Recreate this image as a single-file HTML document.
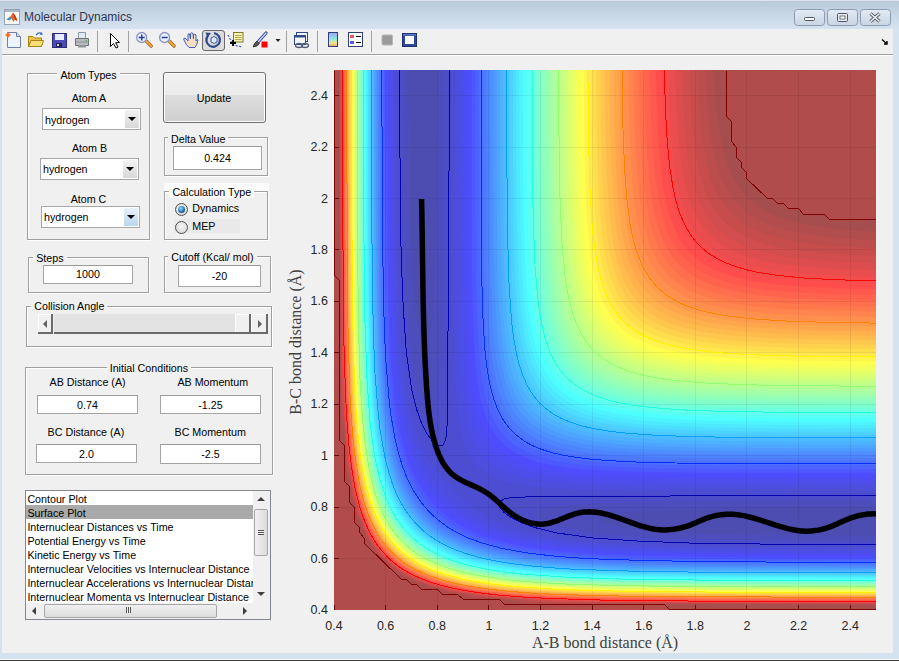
<!DOCTYPE html><html><head><meta charset="utf-8"><style>
*{margin:0;padding:0;box-sizing:border-box}
html,body{width:899px;height:661px;overflow:hidden;background:#f0f0f0;font-family:"Liberation Sans", sans-serif}
.t{position:absolute;white-space:nowrap;font-family:"Liberation Sans", sans-serif}
.tb{background:#f0f0f0;padding:0 3px}
.pnl{position:absolute;border:1px solid #a0a0a0;box-shadow:inset 1px 1px 0 #fff, 1px 1px 0 #fff}
.edit{position:absolute;background:#fff;border:1px solid #a5a5a5;border-top-color:#9a9a9a}
.pop{position:absolute;background:#fff;border:1px solid #a8a8a8}
.popbtn{position:absolute;background:linear-gradient(#f2f2f2,#d8d8d8);}
.popbtn.hov{background:linear-gradient(#e8f2fa,#b8d6ee)}
.arr{position:absolute;width:0;height:0;border-left:4px solid transparent;border-right:4px solid transparent;border-top:4px solid #000}
.btn{position:absolute;border:1px solid #707070;border-radius:3px;background:linear-gradient(#f2f2f2 0,#ebebeb 45%,#dddddd 46%,#cfcfcf 100%);box-shadow:inset 0 0 0 1px #fcfcfc}
.radio{position:absolute;width:13px;height:13px;border-radius:50%;border:1px solid #4f4f4f;background:radial-gradient(circle at 50% 40%,#f8f8f8,#cfcfcf)}
.radio.on::after{content:"";position:absolute;left:2px;top:2px;width:7px;height:7px;border-radius:50%;background:radial-gradient(circle at 40% 35%,#9be0ff,#1a6aa8 60%,#0d3d6b)}
.slider{position:absolute}
.slider div{position:absolute}
.sbtn{background:#f0f0f0;border-right:2px solid #6a6a6a;border-bottom:2px solid #6a6a6a;box-shadow:inset 1px 1px 0 #fff}
.strough{background:#e3e3e3;border-bottom:2px solid #6a6a6a}
.sarrL{width:0;height:0;border-top:4px solid transparent;border-bottom:4px solid transparent;border-right:4px solid #606060}
.sarrR{width:0;height:0;border-top:4px solid transparent;border-bottom:4px solid transparent;border-left:4px solid #606060}
.lb{position:absolute;background:#fff;border:1px solid #828790}
.vsb,.hsb{position:absolute;background:#f0f0f0}
.vsb div,.hsb div{position:absolute}
.vthumb{background:linear-gradient(90deg,#f0f0f0,#dcdcdc);border:1px solid #a7a7a7;border-radius:2px}
.hthumb{background:linear-gradient(#f0f0f0,#dcdcdc);border:1px solid #a7a7a7;border-radius:2px}
.grip{width:6px;height:5px;border-top:1px solid #555;border-bottom:1px solid #555;background:linear-gradient(#f0f0f0 40%,#555 40%,#555 60%,#f0f0f0 60%)}
.hgrip{width:5px;height:6px;border-left:1px solid #555;border-right:1px solid #555;background:linear-gradient(90deg,#f0f0f0 40%,#555 40%,#555 60%,#f0f0f0 60%)}
.up{width:0;height:0;border-left:4px solid transparent;border-right:4px solid transparent;border-bottom:4px solid #404040}
.dn{width:0;height:0;border-left:4px solid transparent;border-right:4px solid transparent;border-top:4px solid #404040}
.lt{width:0;height:0;border-top:4px solid transparent;border-bottom:4px solid transparent;border-right:4px solid #404040}
.rt{width:0;height:0;border-top:4px solid transparent;border-bottom:4px solid transparent;border-left:4px solid #404040}
.plot{position:absolute;left:0;top:0}
#title{position:absolute;left:0;top:0;width:899px;height:29px;background:linear-gradient(#b9cad9,#d5e3f1);border-top:1px solid #dfe5ee}
#tool{position:absolute;left:2px;top:29px;width:891px;height:26px;background:#f0f0f0;border-bottom:1px solid #a0a0a0;box-shadow:0 1px 0 #fff}
.frameL{position:absolute;left:0;top:29px;width:2px;height:630px;background:#d5e2f0}
.frameR{position:absolute;left:893px;top:29px;width:6px;height:630px;background:#d5e2f0}
.frameB{position:absolute;left:0;top:653px;width:899px;height:6px;background:#d5e2f0}
.frameD{position:absolute;left:0;top:659px;width:899px;height:2px;background:#3a3a3a;border-top:1px solid #f8f8f8}
.wb{position:absolute;top:9px;width:31px;height:17px;border:1px solid #8d9db3;border-radius:3px;background:linear-gradient(#dfe8f2,#c9d6e5)}
</style></head><body>
<div id="title"></div>
<div class="frameL"></div><div class="frameR"></div><div class="frameB"></div><div class="frameD"></div>
<div id="tool"></div>
<div class="pnl" style="left:27px;top:73px;width:123px;height:167px;"></div><div class="pnl" style="left:164px;top:137px;width:104px;height:39px;"></div><div class="pnl" style="left:164px;top:191px;width:104px;height:49px;"></div><div class="pnl" style="left:28px;top:257px;width:121px;height:36px;"></div><div class="pnl" style="left:164px;top:256px;width:107px;height:37px;"></div><div class="pnl" style="left:26px;top:306px;width:246px;height:41px;"></div><div class="pnl" style="left:25px;top:367px;width:248px;height:108px;"></div><div class="t" style="left:-11.5px;top:68.8px;width:200px;text-align:center;font-size:10.7px;line-height:13px;color:#000;"><span class="tb">Atom Types</span></div><div class="t" style="left:-11.1px;top:91.8px;width:200px;text-align:center;font-size:10.7px;line-height:13px;color:#000;">Atom A</div><div class="pop" style="left:42px;top:108px;width:99px;height:22px;"></div><div class="popbtn" style="left:125px;top:110px;width:14px;height:18px;"></div><div class="arr" style="left:128px;top:117px"></div><div class="t" style="left:45.0px;top:113.7px;font-size:10.7px;line-height:13px;color:#000;">hydrogen</div><div class="t" style="left:-10.5px;top:141.8px;width:200px;text-align:center;font-size:10.7px;line-height:13px;color:#000;">Atom B</div><div class="pop" style="left:40px;top:158px;width:99px;height:22px;"></div><div class="popbtn" style="left:123px;top:160px;width:14px;height:18px;"></div><div class="arr" style="left:126px;top:167px"></div><div class="t" style="left:43.0px;top:163.2px;font-size:10.7px;line-height:13px;color:#000;">hydrogen</div><div class="t" style="left:-11.5px;top:193.1px;width:200px;text-align:center;font-size:10.7px;line-height:13px;color:#000;">Atom C</div><div class="pop" style="left:41px;top:206px;width:99px;height:22px;"></div><div class="popbtn hov" style="left:124px;top:208px;width:14px;height:18px;"></div><div class="arr" style="left:127px;top:215px"></div><div class="t" style="left:44.0px;top:211.4px;font-size:10.7px;line-height:13px;color:#000;">hydrogen</div><div class="btn" style="left:163px;top:72px;width:103px;height:51px;"></div><div class="t" style="left:114.0px;top:91.8px;width:200px;text-align:center;font-size:10.7px;line-height:13px;color:#000;">Update</div><div class="t" style="left:168.0px;top:133.0px;font-size:10.7px;line-height:13px;color:#000;"><span class="tb">Delta Value</span></div><div class="edit" style="left:173px;top:146px;width:89px;height:24px;"></div><div class="t" style="left:173.0px;top:151.7px;width:89px;text-align:center;font-size:10.7px;line-height:13px;color:#000;">0.424</div><div class="" style="left:164px;top:183px;width:105px;height:8px;position:absolute;background:#fbfbfb"></div><div class="t" style="left:169.4px;top:185.7px;font-size:10.7px;line-height:13px;color:#000;"><span class="tb" style="background:#fbfbfb">Calculation Type</span></div><div class="" style="left:174px;top:219px;width:66px;height:14px;position:absolute;background:#e9e9e9"></div><div class="radio on" style="left:175px;top:203px"></div><div class="radio" style="left:175px;top:221px"></div><div class="t" style="left:192.3px;top:202.4px;font-size:10.7px;line-height:13px;color:#000;">Dynamics</div><div class="t" style="left:192.3px;top:220.2px;font-size:10.7px;line-height:13px;color:#000;">MEP</div><div class="t" style="left:33.2px;top:251.8px;font-size:10.7px;line-height:13px;color:#000;"><span class="tb">Steps</span></div><div class="edit" style="left:43px;top:265px;width:90px;height:19px;"></div><div class="t" style="left:43.0px;top:268.3px;width:90px;text-align:center;font-size:10.7px;line-height:13px;color:#000;">1000</div><div class="t" style="left:168.2px;top:250.7px;font-size:10.7px;line-height:13px;color:#000;"><span class="tb">Cutoff (Kcal/ mol)</span></div><div class="edit" style="left:178px;top:265px;width:83px;height:22px;"></div><div class="t" style="left:178.0px;top:269.5px;width:83px;text-align:center;font-size:10.7px;line-height:13px;color:#000;">-20</div><div class="t" style="left:31.3px;top:300.4px;font-size:10.7px;line-height:13px;color:#000;"><span class="tb">Collision Angle</span></div><div class="slider" style="left:38px;top:314px;width:230px;height:20px">
<div class="sbtn" style="left:0;top:0;width:15px;height:20px"></div>
<div class="sarrL" style="left:5px;top:6px"></div>
<div class="strough" style="left:16px;top:0;width:181px;height:20px"></div>
<div class="sbtn" style="left:197px;top:0;width:16px;height:20px"></div>
<div class="sbtn" style="left:213px;top:0;width:17px;height:20px"></div>
<div class="sarrR" style="left:220px;top:6px"></div>
</div><div class="t" style="left:48.9px;top:361.8px;width:200px;text-align:center;font-size:10.7px;line-height:13px;color:#000;"><span class="tb">Initial Conditions</span></div><div class="t" style="left:-12.4px;top:376.0px;width:200px;text-align:center;font-size:10.7px;line-height:13px;color:#000;">AB Distance (A)</div><div class="edit" style="left:37px;top:395px;width:101px;height:19px;"></div><div class="t" style="left:37.0px;top:399.1px;width:101px;text-align:center;font-size:10.7px;line-height:13px;color:#000;">0.74</div><div class="t" style="left:-14.1px;top:426.2px;width:200px;text-align:center;font-size:10.7px;line-height:13px;color:#000;">BC Distance (A)</div><div class="edit" style="left:36px;top:444px;width:101px;height:19px;"></div><div class="t" style="left:36.0px;top:447.9px;width:101px;text-align:center;font-size:10.7px;line-height:13px;color:#000;">2.0</div><div class="t" style="left:112.8px;top:376.0px;width:200px;text-align:center;font-size:10.7px;line-height:13px;color:#000;">AB Momentum</div><div class="edit" style="left:160px;top:395px;width:101px;height:19px;"></div><div class="t" style="left:160.0px;top:399.1px;width:101px;text-align:center;font-size:10.7px;line-height:13px;color:#000;">-1.25</div><div class="t" style="left:110.2px;top:426.2px;width:200px;text-align:center;font-size:10.7px;line-height:13px;color:#000;">BC Momentum</div><div class="edit" style="left:160px;top:444px;width:101px;height:20px;"></div><div class="t" style="left:160.0px;top:447.9px;width:101px;text-align:center;font-size:10.7px;line-height:13px;color:#000;">-2.5</div><div class="lb" style="left:25px;top:490px;width:246px;height:130px"></div><div class="" style="left:26px;top:505px;width:227px;height:14px;position:absolute;background:#aaaaaa"></div><div style="position:absolute;left:26px;top:491px;width:227px;height:112px;overflow:hidden"><div class="t" style="left:1.4px;top:1.8px;font-size:10.7px;line-height:13px;color:#000;">Contour Plot</div><div class="t" style="left:1.4px;top:15.6px;font-size:10.7px;line-height:13px;color:#000;">Surface Plot</div><div class="t" style="left:1.4px;top:29.8px;font-size:10.7px;line-height:13px;color:#000;">Internuclear Distances vs Time</div><div class="t" style="left:1.4px;top:43.8px;font-size:10.7px;line-height:13px;color:#000;">Potential Energy vs Time</div><div class="t" style="left:1.4px;top:57.5px;font-size:10.7px;line-height:13px;color:#000;">Kinetic Energy vs Time</div><div class="t" style="left:1.4px;top:71.7px;font-size:10.7px;line-height:13px;color:#000;">Internuclear Velocities vs Internuclear Distance</div><div class="t" style="left:1.4px;top:85.5px;font-size:10.7px;line-height:13px;color:#000;">Internuclear Accelerations vs Internuclear Distance</div><div class="t" style="left:1.4px;top:99.7px;font-size:10.7px;line-height:13px;color:#000;">Internuclear Momenta vs Internuclear Distance</div></div><div class="vsb" style="left:253px;top:491px;width:17px;height:112px">
<div class="up" style="left:4px;top:6px"></div>
<div class="vthumb" style="left:1px;top:18px;width:14px;height:47px"></div>
<div class="grip" style="left:5px;top:39px"></div>
<div class="dn" style="left:4px;top:101px"></div></div>
<div class="hsb" style="left:26px;top:603px;width:227px;height:16px">
<div class="lt" style="left:6px;top:4px"></div>
<div class="hthumb" style="left:18px;top:1px;width:173px;height:14px"></div>
<div class="hgrip" style="left:100px;top:4px"></div>
<div class="rt" style="left:217px;top:4px"></div></div>
<div style="position:absolute;left:253px;top:603px;width:17px;height:16px;background:#f0f0f0"></div><div class="t" style="left:314.0px;top:617.7px;width:40px;text-align:center;font-size:12.5px;line-height:16px;color:#262626;">0.4</div><div class="t" style="left:365.6px;top:617.7px;width:40px;text-align:center;font-size:12.5px;line-height:16px;color:#262626;">0.6</div><div class="t" style="left:417.2px;top:617.7px;width:40px;text-align:center;font-size:12.5px;line-height:16px;color:#262626;">0.8</div><div class="t" style="left:468.9px;top:617.7px;width:40px;text-align:center;font-size:12.5px;line-height:16px;color:#262626;">1</div><div class="t" style="left:520.5px;top:617.7px;width:40px;text-align:center;font-size:12.5px;line-height:16px;color:#262626;">1.2</div><div class="t" style="left:572.1px;top:617.7px;width:40px;text-align:center;font-size:12.5px;line-height:16px;color:#262626;">1.4</div><div class="t" style="left:623.7px;top:617.7px;width:40px;text-align:center;font-size:12.5px;line-height:16px;color:#262626;">1.6</div><div class="t" style="left:675.3px;top:617.7px;width:40px;text-align:center;font-size:12.5px;line-height:16px;color:#262626;">1.8</div><div class="t" style="left:727.0px;top:617.7px;width:40px;text-align:center;font-size:12.5px;line-height:16px;color:#262626;">2</div><div class="t" style="left:778.6px;top:617.7px;width:40px;text-align:center;font-size:12.5px;line-height:16px;color:#262626;">2.2</div><div class="t" style="left:830.2px;top:617.7px;width:40px;text-align:center;font-size:12.5px;line-height:16px;color:#262626;">2.4</div><div class="t" style="left:260px;top:602.0px;width:68px;text-align:right;font-size:12.5px;line-height:16px;color:#262626">0.4</div><div class="t" style="left:260px;top:550.6px;width:68px;text-align:right;font-size:12.5px;line-height:16px;color:#262626">0.6</div><div class="t" style="left:260px;top:499.1px;width:68px;text-align:right;font-size:12.5px;line-height:16px;color:#262626">0.8</div><div class="t" style="left:260px;top:447.7px;width:68px;text-align:right;font-size:12.5px;line-height:16px;color:#262626">1</div><div class="t" style="left:260px;top:396.3px;width:68px;text-align:right;font-size:12.5px;line-height:16px;color:#262626">1.2</div><div class="t" style="left:260px;top:344.9px;width:68px;text-align:right;font-size:12.5px;line-height:16px;color:#262626">1.4</div><div class="t" style="left:260px;top:293.4px;width:68px;text-align:right;font-size:12.5px;line-height:16px;color:#262626">1.6</div><div class="t" style="left:260px;top:242.0px;width:68px;text-align:right;font-size:12.5px;line-height:16px;color:#262626">1.8</div><div class="t" style="left:260px;top:190.6px;width:68px;text-align:right;font-size:12.5px;line-height:16px;color:#262626">2</div><div class="t" style="left:260px;top:139.1px;width:68px;text-align:right;font-size:12.5px;line-height:16px;color:#262626">2.2</div><div class="t" style="left:260px;top:87.7px;width:68px;text-align:right;font-size:12.5px;line-height:16px;color:#262626">2.4</div><div class="t" style="left:455.0px;top:632.5px;width:300px;text-align:center;font-size:16px;line-height:20px;color:#404040;font-family:'Liberation Serif',serif;">A-B bond distance (&Aring;)</div><div class="t" style="left:146px;top:332px;width:300px;text-align:center;font-size:16px;line-height:20px;color:#404040;font-family:'Liberation Serif',serif;transform:rotate(-90deg);transform-origin:150px 10px">B-C bond distance (&Aring;)</div>
<svg class="plot" width="899" height="661" viewBox="0 0 899 661">
<defs><clipPath id="ax"><rect x="334" y="70" width="542" height="540"/></clipPath></defs>
<g clip-path="url(#ax)">
<rect x="334" y="70" width="542" height="540" fill="#a64d4d"/>
<path d="M713.8 70.0 715.3 95.7 717.3 116.3 720.4 136.9 723.8 152.3 728.7 167.7 733.3 178.0 739.6 188.3 743.5 193.4 748.4 198.6 757.3 205.9 767.6 212.1 777.9 216.7 793.4 221.6 808.9 225.0 829.5 228.1 850.2 230.1 876.0 231.6 876.0 605.1 576.6 604.2 545.6 603.9 525.0 603.2 514.7 602.0 509.0 599.7 473.4 598.2 468.2 597.2 464.6 594.6 447.6 593.3 442.4 592.0 439.8 589.4 437.2 588.8 432.1 588.5 426.9 587.7 423.2 584.3 421.8 583.7 416.6 583.1 411.4 580.5 410.1 579.1 406.3 578.0 401.1 573.9 395.9 572.2 385.6 562.6 371.9 548.3 370.3 543.1 366.1 538.0 365.0 534.2 363.6 532.9 361.0 527.7 360.4 522.6 359.8 521.1 356.4 517.4 355.6 512.3 355.3 507.1 354.6 504.6 352.0 502.0 350.8 496.9 349.5 479.9 346.9 476.3 345.9 471.1 345.2 460.9 344.7 440.3 344.3 435.7 342.0 430.0 341.2 424.9 340.2 399.1 338.9 70.0 713.8 70.0Z" fill="#b14d4d"/>
<path d="M705.1 70.0 706.9 100.9 709.3 126.6 712.5 147.1 716.0 162.3 721.1 177.7 726.3 188.6 732.8 198.6 737.1 203.7 741.8 208.4 747.0 212.7 752.1 216.3 762.4 221.9 772.8 226.1 788.2 230.7 803.7 233.8 824.4 236.6 850.2 238.9 876.0 240.3 876.0 604.4 597.3 603.6 556.0 603.1 535.3 602.4 525.0 601.6 516.1 599.7 504.3 598.8 478.5 597.5 473.4 596.7 468.1 594.6 447.6 592.0 442.3 589.4 437.2 588.1 432.1 587.5 426.9 585.9 425.1 584.3 421.8 583.0 416.6 582.0 412.5 579.1 406.3 576.9 402.7 574.0 395.9 570.5 394.3 568.9 390.8 566.4 385.6 561.5 377.8 553.4 375.3 549.9 373.7 548.3 370.1 541.5 367.2 538.0 365.0 531.8 362.1 527.7 361.1 522.6 359.8 519.2 358.2 517.4 356.6 512.3 356.0 507.1 354.6 502.1 352.1 496.9 349.5 476.3 347.4 471.1 346.6 466.0 345.3 440.3 344.3 428.6 343.3 424.9 342.0 414.6 340.8 383.7 339.9 224.3 339.7 70.0 705.1 70.0Z" fill="#bc4d4d"/>
<path d="M697.0 70.0 698.5 100.9 700.5 125.6 703.3 147.1 706.3 162.6 710.5 178.0 716.0 191.6 719.7 198.6 723.0 203.7 726.9 208.9 731.5 213.9 736.6 218.6 741.8 222.4 752.1 228.5 766.8 234.6 783.1 239.1 798.6 242.0 820.2 244.9 845.0 246.8 876.0 248.3 876.0 603.8 607.6 603.1 566.3 602.6 540.5 601.6 530.2 600.7 524.0 599.7 483.7 597.0 478.5 596.4 472.0 594.6 463.0 593.1 452.7 591.9 447.6 590.7 444.9 589.4 437.2 587.4 432.1 586.6 421.8 582.3 416.6 580.9 414.1 579.1 406.3 575.8 390.8 565.1 385.6 560.3 379.0 553.4 368.4 538.0 365.0 530.2 363.2 527.7 361.8 522.6 357.5 512.3 356.7 507.1 354.6 499.5 353.3 496.9 352.1 491.7 351.0 481.4 349.5 472.5 347.7 466.0 346.6 455.7 344.3 420.7 343.3 414.6 342.4 404.3 341.4 373.4 340.4 229.4 340.2 70.0 697.0 70.0Z" fill="#c74d4d"/>
<path d="M689.3 70.0 690.9 106.0 692.9 131.7 695.5 152.3 699.5 172.9 704.1 188.3 706.0 193.4 710.8 203.5 717.6 214.0 721.9 219.1 726.3 223.5 731.5 227.8 736.6 231.4 747.0 237.0 753.1 239.7 762.4 243.0 777.9 247.0 794.5 250.0 819.2 252.9 845.0 254.7 876.0 256.0 876.0 603.3 617.9 602.6 571.4 601.9 545.6 600.9 488.9 596.7 452.7 591.0 432.1 585.6 416.6 579.7 406.3 574.6 395.9 567.8 390.8 563.9 385.6 559.2 380.3 553.4 376.3 548.3 369.5 538.0 364.4 527.7 358.5 512.3 353.0 491.7 349.5 468.5 347.9 460.9 343.1 399.1 341.9 363.1 341.0 234.6 340.7 70.0 689.3 70.0Z" fill="#d24d4d"/>
<path d="M682.0 70.0 683.4 106.0 685.2 131.7 687.4 152.3 690.8 172.9 695.3 190.5 700.5 204.1 705.7 214.0 710.8 221.5 716.0 227.4 721.1 232.3 726.3 236.3 736.6 242.5 741.8 245.0 752.1 249.0 767.6 253.4 788.2 257.2 814.1 260.1 839.9 261.9 876.0 263.3 876.0 602.8 628.2 602.1 581.8 601.5 550.8 600.3 488.9 595.9 457.9 591.1 452.7 590.2 432.1 584.7 417.4 579.1 406.9 574.0 395.9 566.9 390.8 562.8 385.6 558.1 380.5 552.4 375.3 545.6 370.5 538.0 367.8 532.9 365.0 526.9 359.4 512.3 353.9 491.7 348.1 455.7 343.5 388.9 342.4 352.9 341.5 234.6 341.2 70.0 682.0 70.0Z" fill="#de4d4d"/>
<path d="M675.1 70.0 676.3 106.0 678.3 136.9 681.1 162.6 684.8 183.1 689.0 198.6 690.7 203.7 695.2 214.0 701.1 224.3 704.9 229.4 709.5 234.6 715.1 239.7 721.1 244.2 731.5 250.2 741.8 254.6 747.0 256.3 762.4 260.5 783.1 264.2 808.9 267.0 839.9 269.0 876.0 270.2 876.0 602.3 726.3 602.1 617.9 601.4 571.4 600.5 530.2 598.4 488.9 595.2 457.9 590.4 442.4 586.8 432.1 583.9 419.2 579.1 408.5 574.0 401.1 569.6 395.9 566.0 390.8 561.8 385.6 557.0 380.5 551.2 375.3 544.3 368.6 532.9 365.0 525.1 362.0 517.4 357.3 502.0 353.6 486.6 348.9 455.7 345.3 409.4 343.6 373.4 342.9 347.7 342.0 234.6 341.7 70.0 675.1 70.0Z" fill="#e94d4d"/>
<path d="M668.4 70.0 669.5 106.0 671.2 136.9 673.7 162.6 676.9 183.1 680.5 198.6 685.7 214.0 690.2 223.5 693.7 229.4 697.4 234.6 701.7 239.7 707.0 244.9 713.6 250.0 721.1 254.7 726.3 257.3 733.2 260.3 741.8 263.3 757.3 267.3 777.9 270.9 803.7 273.6 834.7 275.5 876.0 276.8 876.0 601.8 695.3 601.4 592.1 600.4 550.8 598.9 519.8 597.2 494.0 595.1 473.4 592.3 452.7 588.6 432.1 583.1 421.8 579.4 416.6 577.2 410.0 574.0 401.2 568.9 390.8 560.8 385.6 555.9 380.5 550.0 375.4 543.1 372.2 538.0 369.4 532.9 364.7 522.6 359.8 508.7 356.7 496.9 354.3 486.6 351.7 471.1 348.5 445.4 345.4 399.1 343.8 358.0 343.0 311.7 342.5 214.0 342.2 70.0 668.4 70.0Z" fill="#f44d4d"/>
<path d="M662.0 70.0 663.2 111.1 664.9 142.0 668.0 172.9 671.5 193.4 675.4 208.9 679.0 219.1 681.2 224.3 685.0 231.7 690.2 239.6 694.4 244.9 699.5 250.0 705.7 255.1 710.8 258.5 716.0 261.5 724.3 265.4 739.1 270.6 757.3 274.8 777.9 277.9 803.7 280.3 834.7 282.0 876.0 283.2 876.0 601.3 695.3 600.9 597.3 599.9 556.0 598.6 519.8 596.6 494.0 594.4 468.2 590.9 447.6 586.7 432.1 582.4 422.9 579.1 416.6 576.4 411.4 573.9 401.1 567.8 395.4 563.7 389.4 558.6 384.4 553.4 380.0 548.3 375.3 541.6 370.2 532.9 365.0 521.4 360.0 507.1 357.3 496.9 354.6 484.8 352.4 471.1 349.1 445.4 345.9 399.1 344.3 352.9 343.5 306.6 343.0 214.0 342.8 70.0 662.0 70.0Z" fill="#ff4d4d"/>
<path d="M655.9 70.0 657.0 111.1 658.8 147.1 661.2 172.9 664.2 193.4 666.4 203.7 669.1 214.0 674.7 229.2 680.2 239.7 685.0 246.8 690.2 252.8 695.3 257.6 700.5 261.7 706.2 265.4 716.0 270.5 731.5 276.1 751.5 280.9 772.8 284.0 798.6 286.4 834.7 288.2 876.0 289.3 876.0 600.8 690.2 600.4 592.1 599.2 550.8 597.8 519.8 596.0 499.2 594.3 473.4 591.1 452.7 587.3 440.5 584.3 432.1 581.7 424.9 579.1 416.6 575.6 404.1 568.9 396.7 563.7 390.8 558.8 385.6 553.7 381.0 548.3 374.0 538.0 370.1 531.1 366.3 522.6 359.8 503.9 356.8 491.7 353.8 476.3 349.5 443.2 346.8 404.3 345.0 358.0 344.0 301.4 343.3 70.0 655.9 70.0Z" fill="#ff584d"/>
<path d="M650.0 70.0 651.1 116.3 653.0 152.3 655.3 178.0 659.2 203.2 661.7 214.0 664.4 223.2 669.5 236.4 674.0 244.9 677.3 250.0 681.3 255.1 686.0 260.3 691.9 265.4 699.3 270.6 710.8 276.6 726.3 282.1 736.6 284.8 747.0 286.9 772.8 290.4 798.6 292.6 834.7 294.2 876.0 295.1 876.0 600.2 685.0 599.8 592.1 598.6 550.8 597.2 519.8 595.5 499.2 593.7 473.4 590.5 452.7 586.6 437.2 582.6 426.9 579.2 421.8 577.1 414.9 574.0 405.5 568.9 398.0 563.7 391.7 558.6 386.5 553.4 382.1 548.3 374.8 538.0 370.1 529.4 367.1 522.6 363.2 512.3 359.8 501.4 354.4 476.3 352.2 460.9 349.8 440.3 347.3 404.3 345.5 352.9 344.4 291.1 343.8 70.0 650.0 70.0Z" fill="#ff634d"/>
<path d="M644.3 70.0 645.4 116.3 647.0 152.3 649.1 178.0 652.6 203.7 654.7 214.0 657.4 224.3 659.2 230.2 662.9 239.7 665.3 244.9 669.5 252.4 674.7 259.6 679.8 265.4 685.7 270.6 692.9 275.7 700.5 280.0 705.7 282.4 715.2 286.0 721.1 287.8 731.5 290.5 741.8 292.5 767.6 296.1 793.4 298.2 829.5 299.8 876.0 300.8 876.0 599.7 690.2 599.3 592.1 598.0 550.8 596.6 519.8 594.9 494.0 592.5 473.4 589.9 447.6 584.7 432.1 580.2 416.6 574.0 406.3 568.4 399.3 563.7 393.0 558.6 387.6 553.4 383.1 548.3 375.3 537.2 370.1 527.7 367.9 522.6 363.9 512.3 359.8 498.7 354.6 473.9 350.5 440.3 347.9 404.3 346.2 358.0 345.1 296.3 344.5 208.9 344.3 70.0 644.3 70.0Z" fill="#ff6e4d"/>
<path d="M638.8 70.0 639.9 121.4 641.5 157.4 643.7 184.1 647.2 208.9 649.2 219.1 651.8 229.4 654.0 236.4 657.3 244.9 659.7 250.0 664.4 258.3 669.5 265.4 674.7 271.1 679.9 275.7 687.0 280.9 695.3 285.5 700.5 287.9 709.0 291.1 716.0 293.3 726.3 296.0 736.6 298.0 761.5 301.4 788.2 303.6 824.4 305.2 876.0 306.3 876.0 599.1 690.2 598.7 592.1 597.4 556.0 596.3 523.4 594.6 499.2 592.5 474.7 589.4 452.7 585.2 437.2 581.1 431.2 579.1 421.8 575.4 408.6 568.9 401.1 564.0 395.9 560.0 390.8 555.4 385.6 550.0 380.5 543.6 376.7 538.0 370.1 525.9 365.0 513.2 361.5 502.0 358.9 491.7 355.8 476.3 354.1 466.0 351.6 445.4 348.8 409.4 346.9 363.1 345.7 301.4 345.1 214.0 344.9 70.0 638.8 70.0Z" fill="#ff794d"/>
<path d="M633.5 70.0 634.5 121.4 636.0 157.4 638.3 188.3 641.9 214.0 643.9 224.3 646.5 234.6 648.9 242.0 652.0 250.0 654.3 255.1 659.2 263.7 664.2 270.6 668.8 275.7 674.7 281.0 681.6 286.0 690.2 290.9 695.3 293.2 703.4 296.3 710.8 298.6 721.1 301.2 731.5 303.3 757.3 306.8 788.2 309.1 824.4 310.6 876.0 311.6 876.0 598.5 695.3 598.2 597.3 597.0 561.1 595.9 532.7 594.6 504.3 592.3 479.1 589.4 452.7 584.6 437.2 580.3 421.8 574.6 410.2 568.9 402.1 563.7 395.9 559.0 390.8 554.3 385.6 548.8 381.2 543.1 377.7 538.0 374.6 532.9 370.1 524.0 365.5 512.3 362.3 502.0 359.5 491.7 356.5 476.3 354.6 465.5 352.2 445.4 349.3 409.4 347.5 363.1 346.3 301.4 345.7 214.0 345.5 70.0 633.5 70.0Z" fill="#ff844d"/>
<path d="M628.4 70.0 629.3 121.4 630.9 162.6 633.2 193.4 636.8 219.1 638.8 229.4 641.4 239.7 643.7 247.0 646.9 255.1 649.2 260.3 654.0 268.7 659.1 275.7 663.7 280.9 669.5 286.1 676.5 291.1 685.0 295.9 690.2 298.3 698.3 301.4 705.7 303.7 716.0 306.3 726.3 308.4 752.1 311.9 783.1 314.2 824.4 315.8 876.0 316.7 876.0 598.0 695.3 597.6 597.3 596.4 561.1 595.3 535.3 594.1 509.5 592.2 483.7 589.4 457.9 585.0 442.4 581.1 432.1 577.8 422.2 574.0 411.4 568.7 403.6 563.7 396.8 558.6 391.1 553.4 386.3 548.3 378.7 538.0 375.3 532.5 370.3 522.6 365.0 508.6 361.6 496.9 359.1 486.6 356.3 471.1 354.6 460.8 352.4 440.3 349.5 401.2 347.8 352.9 346.8 291.1 346.1 70.0 628.4 70.0Z" fill="#ff8f4d"/>
<path d="M623.4 70.0 624.2 121.4 625.6 162.6 627.8 193.4 631.0 219.1 632.8 229.4 635.1 239.7 638.1 250.0 642.0 260.3 644.3 265.4 648.9 273.4 654.0 280.6 658.9 286.0 664.6 291.1 671.8 296.3 679.8 300.8 685.0 303.2 695.3 307.1 705.7 310.0 716.0 312.3 726.3 314.1 752.1 317.3 783.1 319.4 824.4 320.9 876.0 321.7 876.0 597.4 695.3 597.0 597.3 595.8 561.1 594.7 535.3 593.4 504.3 591.1 483.7 588.7 457.9 584.3 438.3 579.1 424.2 574.0 411.4 567.7 405.0 563.7 398.1 558.6 392.3 553.4 387.5 548.3 379.6 538.0 375.3 530.8 371.2 522.6 367.1 512.3 363.8 502.0 359.8 486.6 357.8 476.3 355.4 460.9 353.5 445.4 351.7 424.9 350.0 399.1 348.4 352.9 347.4 291.1 346.7 70.0 623.4 70.0Z" fill="#ff9b4d"/>
<path d="M618.5 70.0 619.4 126.6 620.8 167.7 623.0 198.6 626.2 224.3 628.0 234.6 630.4 244.9 633.3 255.1 637.2 265.4 642.5 275.7 645.8 280.9 649.7 286.0 654.4 291.1 660.2 296.3 667.5 301.4 674.7 305.5 679.8 307.9 690.2 311.8 700.5 314.7 710.8 317.1 721.1 318.9 747.0 322.1 777.9 324.2 819.2 325.7 876.0 326.5 876.0 596.8 695.3 596.4 597.3 595.2 561.1 594.1 530.2 592.5 504.3 590.4 483.7 588.0 461.4 584.3 442.4 579.6 426.9 574.3 415.3 568.9 406.5 563.7 401.1 559.8 395.9 555.6 390.8 550.6 385.6 544.8 380.6 538.0 374.6 527.7 370.1 518.1 366.1 507.1 363.1 496.9 359.8 483.1 356.8 466.0 354.6 450.1 351.3 409.4 349.4 368.3 348.1 301.4 347.5 214.0 347.3 70.0 618.5 70.0Z" fill="#ffa64d"/>
<path d="M613.8 70.0 614.6 126.6 615.9 167.7 618.3 203.7 621.5 229.4 623.4 239.7 625.7 250.0 628.7 260.3 632.7 270.6 638.6 281.8 643.7 289.2 648.9 295.1 654.0 299.8 659.2 303.8 664.4 307.1 674.7 312.4 685.0 316.3 695.3 319.3 705.7 321.7 716.0 323.5 741.8 326.7 777.9 329.1 819.2 330.5 876.0 331.2 876.0 596.2 695.3 595.8 597.3 594.6 561.1 593.5 530.2 591.8 500.6 589.4 483.7 587.3 465.1 584.3 443.5 579.1 428.4 574.0 416.6 568.6 408.2 563.7 401.1 558.8 395.9 554.4 390.8 549.4 385.6 543.4 381.7 538.0 375.3 527.3 370.1 515.9 365.3 502.0 359.8 479.4 356.8 460.9 354.8 445.4 351.9 409.4 349.8 363.1 348.7 306.6 348.1 219.1 347.9 70.0 613.8 70.0Z" fill="#ffb14d"/>
<path d="M609.2 70.0 610.0 131.7 611.3 172.9 613.8 208.9 617.0 234.6 621.3 255.1 624.3 265.4 628.2 275.5 633.4 285.5 637.1 291.1 641.2 296.3 646.1 301.4 652.1 306.6 659.2 311.4 669.5 316.8 674.7 318.9 685.0 322.4 695.3 325.0 716.0 328.8 741.8 331.7 777.9 333.9 819.2 335.1 876.0 335.8 876.0 595.6 695.3 595.2 602.4 594.1 561.1 592.8 530.2 591.2 507.4 589.4 483.7 586.6 463.0 583.1 442.4 578.0 426.9 572.4 419.0 568.9 411.4 564.7 401.1 557.6 395.9 553.2 390.8 548.1 382.8 538.0 379.5 532.9 375.3 525.3 370.1 513.7 366.2 502.0 363.3 491.7 360.0 476.3 357.5 460.9 355.0 440.3 352.6 409.4 350.5 363.1 349.3 306.6 348.7 219.1 348.4 70.0 609.2 70.0Z" fill="#ffbc4d"/>
<path d="M604.7 70.0 605.4 131.7 606.9 178.0 609.4 214.0 612.6 239.7 614.5 250.0 617.9 263.8 620.1 270.6 624.1 280.9 628.2 288.8 633.1 296.3 637.2 301.4 642.2 306.6 648.4 311.7 654.0 315.5 659.2 318.4 669.5 323.1 679.8 326.7 690.2 329.4 710.8 333.2 736.6 336.1 772.8 338.4 814.1 339.6 876.0 340.3 876.0 595.0 690.2 594.6 602.4 593.5 561.1 592.2 530.2 590.5 509.5 588.9 483.7 585.9 463.0 582.3 449.3 579.1 442.4 577.1 433.0 574.0 426.9 571.5 420.9 568.9 411.4 563.7 401.1 556.4 395.9 551.9 390.8 546.7 385.6 540.4 380.5 532.9 375.3 523.4 370.1 511.4 365.5 496.9 362.9 486.6 359.8 471.4 355.7 440.3 352.9 404.3 350.9 352.9 349.8 291.1 349.0 70.0 604.7 70.0Z" fill="#ffc74d"/>
<path d="M600.3 70.0 601.0 131.7 602.3 178.0 604.6 214.0 607.5 239.7 610.3 255.1 612.7 265.4 617.8 280.9 622.6 291.1 625.7 296.3 629.2 301.4 633.4 306.6 638.6 311.7 645.1 316.9 654.0 322.4 664.2 327.1 679.8 332.3 690.2 334.7 705.3 337.4 731.5 340.4 767.6 342.7 814.1 344.0 876.0 344.7 876.0 594.4 705.7 594.1 607.6 592.9 566.3 591.7 535.3 590.2 514.7 588.7 488.9 585.9 468.2 582.6 447.6 577.8 432.1 572.7 422.9 568.9 416.6 565.6 405.4 558.6 395.9 550.6 390.8 545.3 385.6 538.9 378.6 527.7 375.3 521.4 370.1 508.9 365.0 492.0 362.6 481.4 359.8 466.9 357.6 450.6 354.2 414.6 351.8 363.1 350.5 301.4 349.9 214.0 349.6 70.0 600.3 70.0Z" fill="#ffd24d"/>
<path d="M596.0 70.0 596.6 131.7 597.8 178.0 599.9 214.0 602.6 239.7 605.1 255.1 607.3 265.4 610.2 275.7 612.7 283.1 618.8 296.3 623.1 303.2 629.9 311.7 635.3 316.9 643.7 323.2 650.5 327.1 659.2 331.1 669.5 334.8 678.9 337.4 700.5 341.6 716.0 343.6 731.5 345.1 767.6 347.1 814.1 348.4 876.0 349.0 876.0 593.8 700.5 593.4 602.4 592.1 566.3 591.1 535.3 589.6 509.5 587.5 488.9 585.1 468.2 581.8 455.7 579.1 447.6 576.9 438.0 574.0 432.1 571.8 425.0 568.9 416.6 564.6 406.3 558.1 400.4 553.4 394.9 548.3 390.8 543.9 386.1 538.0 379.6 527.7 375.3 519.3 370.1 506.4 365.8 491.7 363.4 481.4 360.5 466.0 358.3 450.6 354.6 411.5 352.5 363.1 351.2 301.4 350.6 214.0 350.3 70.0 596.0 70.0Z" fill="#ffde4d"/>
<path d="M591.8 70.0 592.3 131.7 593.5 178.0 595.4 214.0 596.7 229.4 598.5 244.9 602.4 266.6 604.7 275.7 608.0 286.0 612.4 296.3 615.1 301.4 618.3 306.6 622.1 311.7 626.6 316.9 632.2 322.0 638.6 326.8 648.1 332.3 654.0 335.0 664.4 338.7 674.7 341.6 685.0 343.9 700.5 346.4 716.0 348.3 731.5 349.6 767.6 351.5 814.1 352.6 876.0 353.2 876.0 593.1 700.5 592.7 602.4 591.5 566.3 590.4 540.5 589.2 514.7 587.2 488.9 584.4 463.0 580.0 447.6 576.1 440.7 574.0 432.1 570.8 426.9 568.7 416.8 563.7 406.3 556.9 396.2 548.3 391.4 543.1 387.3 538.0 380.5 527.5 375.3 517.2 370.1 503.7 366.6 491.7 364.2 481.4 361.3 466.0 359.0 450.6 356.9 430.0 354.9 404.3 353.0 358.0 351.8 296.3 351.2 208.9 351.0 70.0 591.8 70.0Z" fill="#ffe94d"/>
<path d="M587.6 70.0 588.2 136.9 589.4 183.1 591.3 219.1 592.7 234.6 594.6 250.0 598.2 270.6 600.9 280.9 604.3 291.1 608.7 301.4 612.7 308.6 617.9 315.8 623.4 322.0 629.2 327.1 636.6 332.3 643.7 336.3 654.0 340.7 664.4 344.1 674.7 346.7 695.3 350.4 710.8 352.3 726.3 353.6 762.4 355.5 808.9 356.7 876.0 357.3 876.0 592.4 705.7 592.0 607.6 590.9 571.4 589.9 545.6 588.7 519.8 586.9 493.4 584.3 478.5 582.0 463.0 579.2 447.6 575.2 432.1 569.9 418.8 563.7 411.4 559.3 406.3 555.6 397.6 548.3 392.8 543.1 388.6 538.0 384.9 532.9 380.5 525.5 375.3 514.9 370.5 502.0 364.9 481.4 362.1 466.0 359.7 450.6 357.6 430.0 355.6 404.3 353.7 358.0 352.5 296.3 351.9 208.9 351.7 70.0 587.6 70.0Z" fill="#fff44d"/>
<path d="M583.6 70.0 584.2 136.9 585.2 183.1 587.0 219.1 590.0 250.0 592.1 264.1 594.4 275.7 597.1 286.0 600.6 296.3 602.7 301.4 608.1 311.7 612.7 318.5 617.9 324.5 623.1 329.4 628.2 333.5 634.3 337.4 644.4 342.6 654.0 346.2 664.4 349.3 674.7 351.6 690.2 354.3 705.7 356.2 721.1 357.6 757.3 359.5 803.7 360.7 876.0 361.3 876.0 591.7 705.7 591.4 607.6 590.3 576.1 589.4 545.6 588.0 514.7 585.8 494.0 583.6 468.2 579.4 452.7 575.7 442.4 572.7 432.1 569.0 420.8 563.7 411.4 558.1 405.0 553.4 399.1 548.3 394.1 543.1 389.8 538.0 385.6 532.2 380.5 523.5 375.3 512.5 371.4 502.0 368.4 491.7 365.0 477.6 362.0 460.9 359.8 444.9 356.4 404.3 354.5 363.1 353.2 296.3 352.6 208.9 352.3 70.0 583.6 70.0Z" fill="#ffff4d"/>
<path d="M579.6 70.0 580.1 136.9 581.3 188.3 583.1 224.3 586.1 255.1 588.6 270.6 590.7 280.9 593.5 291.1 597.1 301.4 601.8 311.7 604.8 316.9 608.4 322.0 612.7 327.3 617.9 332.4 624.1 337.4 633.4 343.2 643.2 347.7 659.2 353.0 669.5 355.4 685.0 358.1 700.5 360.0 716.0 361.4 752.1 363.4 803.7 364.7 876.0 365.3 876.0 591.1 695.3 590.7 599.9 589.4 566.3 588.3 535.3 586.6 506.7 584.3 488.9 582.0 471.1 579.1 449.5 574.0 434.3 568.9 421.8 563.1 411.4 556.9 406.3 553.2 400.5 548.3 395.4 543.1 390.8 537.7 385.6 530.4 381.1 522.6 375.3 510.0 370.7 496.9 365.0 473.4 362.1 455.7 360.1 440.3 357.1 404.3 355.0 358.0 353.9 301.4 353.2 214.0 353.0 70.0 579.6 70.0Z" fill="#f4ff58"/>
<path d="M575.7 70.0 576.2 142.0 577.4 193.4 579.3 229.4 582.4 260.3 584.9 275.7 587.1 286.0 589.9 296.3 593.6 306.6 597.3 314.4 601.7 322.0 607.6 329.8 612.7 335.2 622.0 342.6 628.2 346.4 633.4 349.0 643.7 353.3 654.0 356.5 664.4 359.0 674.7 361.0 689.7 363.1 721.1 366.0 757.3 367.6 803.7 368.6 876.0 369.2 876.0 590.4 710.8 590.1 617.9 589.1 581.8 588.1 550.8 586.8 519.8 584.7 499.2 582.6 475.6 579.1 452.7 574.0 436.9 568.9 425.1 563.7 416.6 559.0 411.4 555.6 402.1 548.3 396.9 543.1 392.4 538.0 385.1 527.7 380.5 519.2 375.3 507.5 370.1 491.7 367.6 481.4 365.0 468.9 362.2 450.6 359.8 430.2 358.6 414.6 356.1 368.3 354.6 308.7 353.9 219.1 353.7 70.0 575.7 70.0Z" fill="#e9ff63"/>
<path d="M571.9 70.0 572.4 147.1 573.7 198.6 575.5 234.6 576.9 250.0 578.7 265.4 582.3 286.0 584.9 296.3 588.3 306.6 592.7 316.9 597.3 325.0 602.4 332.2 607.6 337.9 612.8 342.6 620.1 347.7 628.2 352.3 638.6 356.7 648.9 360.0 659.2 362.6 669.5 364.6 685.0 366.9 716.0 369.7 752.1 371.4 803.7 372.5 876.0 373.0 876.0 589.7 710.8 589.4 612.7 588.2 571.4 587.0 540.5 585.5 519.8 584.0 494.0 581.1 478.5 578.8 456.2 574.0 439.7 568.9 426.9 563.5 416.6 557.8 410.1 553.4 403.7 548.3 398.4 543.1 393.8 538.0 389.8 532.9 385.6 526.5 380.5 517.0 376.2 507.1 372.7 496.9 369.7 486.6 366.3 471.1 363.7 455.7 361.2 435.1 359.3 414.6 356.7 363.1 355.3 301.4 354.6 219.1 354.3 70.0 571.9 70.0Z" fill="#deff6e"/>
<path d="M568.1 70.0 568.5 136.9 569.3 183.1 570.6 219.1 572.7 250.0 575.9 275.7 580.1 296.3 585.0 311.7 587.1 316.9 592.1 326.6 597.3 334.3 604.7 342.6 610.8 347.7 618.4 352.9 628.2 357.9 638.6 361.8 648.9 364.8 664.4 368.1 679.8 370.5 695.3 372.2 716.0 373.7 736.6 374.7 793.4 376.2 876.0 376.8 876.0 589.0 705.7 588.6 607.6 587.3 571.4 586.2 540.5 584.7 514.7 582.6 494.0 580.3 478.5 577.9 457.9 573.5 442.4 568.8 426.9 562.3 416.6 556.5 411.4 553.1 405.3 548.3 399.8 543.1 395.2 538.0 390.8 532.4 385.6 524.5 380.5 514.6 375.3 502.0 369.4 481.4 366.2 466.0 363.8 450.6 361.5 430.0 359.7 409.4 357.3 358.0 356.0 296.3 355.3 208.9 355.1 70.0 568.1 70.0Z" fill="#d2ff79"/>
<path d="M564.4 70.0 564.7 136.9 565.6 188.3 566.9 224.3 569.1 255.1 572.4 280.9 576.7 301.4 581.8 317.0 586.5 327.1 589.5 332.3 593.0 337.4 597.3 342.6 602.4 347.7 608.9 352.9 617.9 358.4 628.2 363.2 638.6 366.7 648.9 369.5 664.4 372.5 679.8 374.7 695.3 376.2 736.6 378.6 793.4 379.9 876.0 380.5 876.0 588.2 705.7 587.8 607.6 586.6 545.6 584.3 519.8 582.3 494.0 579.5 468.2 574.9 452.7 571.0 445.6 568.9 437.2 565.8 432.1 563.7 421.9 558.6 411.4 551.7 401.4 543.1 396.6 538.0 392.5 532.9 385.7 522.6 380.5 512.2 375.3 498.9 371.7 486.6 369.2 476.3 366.3 460.9 364.0 445.4 361.8 424.9 359.8 399.1 357.9 352.9 356.7 291.1 356.1 208.9 355.8 70.0 564.4 70.0Z" fill="#c7ff84"/>
<path d="M560.7 70.0 561.1 142.0 562.0 193.4 563.3 229.4 565.6 260.3 568.9 286.0 570.9 296.3 573.4 306.6 576.6 316.8 578.6 322.0 581.8 328.9 586.7 337.4 592.1 344.6 597.3 350.0 602.4 354.5 607.6 358.2 612.7 361.3 623.1 366.3 633.4 370.0 646.3 373.4 659.2 375.9 674.7 378.2 690.2 379.8 731.5 382.2 788.2 383.6 876.0 384.1 876.0 587.5 705.7 587.1 612.7 585.9 576.6 584.9 550.8 583.7 525.0 581.9 498.0 579.1 473.4 575.1 457.9 571.5 442.4 566.6 434.9 563.7 426.9 560.0 415.7 553.4 408.8 548.3 403.0 543.1 398.1 538.0 393.9 532.9 387.0 522.6 381.7 512.3 377.5 502.0 374.1 491.7 370.1 476.5 365.0 446.6 362.7 424.9 361.0 404.3 359.8 384.2 358.8 358.0 357.5 296.3 356.9 208.9 356.6 70.0 560.7 70.0Z" fill="#bcff8f"/>
<path d="M557.1 70.0 557.4 142.0 558.3 193.4 559.5 229.4 561.6 260.3 564.7 286.0 566.5 296.3 568.8 306.6 573.5 322.0 578.0 332.3 581.8 339.1 586.9 346.4 592.7 352.9 598.5 358.0 607.6 364.1 617.9 369.3 628.2 373.2 638.6 376.1 654.0 379.3 669.5 381.6 685.0 383.2 705.7 384.8 726.3 385.8 783.1 387.1 876.0 387.7 876.0 586.7 710.8 586.3 617.9 585.3 581.8 584.4 556.0 583.2 530.2 581.5 504.3 579.0 478.5 575.1 463.0 571.8 447.6 567.4 437.6 563.7 432.1 561.2 421.8 555.8 410.6 548.3 404.7 543.1 399.7 538.0 395.3 532.9 390.8 526.5 385.6 517.8 380.5 506.8 375.3 492.3 372.4 481.4 369.0 466.0 365.8 445.4 364.0 430.0 362.2 409.4 359.8 365.2 358.4 301.4 357.7 214.0 357.4 70.0 557.1 70.0Z" fill="#b1ff9b"/>
<path d="M553.5 70.0 553.8 142.0 554.6 193.4 556.0 234.6 558.2 265.4 561.3 291.1 565.6 311.7 568.6 322.0 571.4 329.5 575.1 337.4 578.1 342.6 581.5 347.7 585.7 352.9 590.7 358.0 597.3 363.4 607.6 369.7 617.9 374.4 628.2 377.9 638.6 380.5 654.0 383.5 669.5 385.6 685.0 387.1 726.3 389.5 783.1 390.7 876.0 391.3 876.0 585.9 705.7 585.5 612.7 584.4 581.8 583.5 550.8 582.0 525.0 580.2 504.3 578.1 478.5 574.2 463.0 570.8 447.6 566.2 440.5 563.7 432.1 560.0 419.9 553.4 412.6 548.3 406.4 543.1 401.2 538.0 396.8 532.9 390.8 524.4 385.6 515.4 380.5 503.9 376.2 491.7 373.4 481.4 370.1 467.1 367.4 450.6 365.0 431.5 363.1 409.4 360.6 363.1 359.2 306.6 358.5 219.1 358.2 70.0 553.5 70.0Z" fill="#a6ffa6"/>
<path d="M550.0 70.0 550.3 147.1 551.1 198.6 552.6 239.7 554.7 270.6 558.0 296.3 559.9 306.6 562.4 316.9 567.5 332.3 571.4 340.8 575.5 347.7 581.8 356.1 588.8 363.1 595.5 368.3 604.2 373.4 616.0 378.6 628.2 382.4 638.6 384.9 654.0 387.6 669.5 389.6 685.0 391.0 705.7 392.3 731.5 393.3 788.2 394.4 876.0 394.8 876.0 585.2 710.8 584.8 623.1 583.8 581.8 582.6 550.8 581.2 522.2 579.1 504.3 577.1 482.7 574.0 459.5 568.9 443.5 563.7 431.5 558.6 421.8 553.2 414.6 548.3 408.3 543.1 403.0 538.0 398.4 532.9 391.0 522.6 385.6 512.8 380.9 502.0 377.4 491.7 374.4 481.4 370.1 461.9 368.4 450.6 365.8 430.0 363.9 409.4 361.3 358.0 359.8 296.3 359.2 208.9 358.9 70.0 550.0 70.0Z" fill="#9bffb1"/>
<path d="M546.5 70.0 546.8 147.1 547.5 198.6 548.9 239.7 550.9 270.6 553.9 296.3 558.0 316.9 560.8 327.1 564.7 337.4 567.0 342.6 571.4 350.5 576.8 358.0 581.5 363.1 586.9 368.1 594.4 373.4 602.4 377.9 612.7 382.2 623.1 385.5 633.4 388.1 648.9 390.9 664.4 392.9 679.8 394.3 700.5 395.7 726.3 396.7 783.1 397.8 876.0 398.3 876.0 584.4 710.8 584.0 617.9 582.8 581.8 581.8 550.8 580.3 530.2 578.9 504.3 576.2 488.5 574.0 463.6 568.9 446.7 563.7 434.3 558.6 421.8 551.7 416.6 548.3 410.1 543.1 401.1 534.1 395.9 527.7 392.5 522.6 386.7 512.3 382.2 502.0 378.5 491.7 375.3 480.9 372.0 466.0 369.3 450.6 366.7 430.0 364.8 409.4 362.2 358.0 360.7 296.3 360.0 208.9 359.7 70.0 546.5 70.0Z" fill="#8fffbc"/>
<path d="M543.0 70.0 543.3 147.1 544.0 198.6 545.2 239.7 547.1 270.6 548.6 286.0 550.7 301.4 554.8 322.0 559.7 337.4 564.3 347.7 567.2 352.9 571.4 359.2 574.7 363.1 579.6 368.3 586.9 374.3 597.3 380.5 607.6 385.1 617.9 388.6 628.2 391.2 643.7 394.1 659.2 396.2 679.8 398.1 721.1 400.1 783.1 401.3 876.0 401.7 876.0 583.5 710.8 583.1 617.9 581.9 581.8 580.9 550.8 579.5 525.0 577.5 504.3 575.2 488.9 573.0 468.0 568.9 450.2 563.7 437.0 558.6 426.9 553.4 418.8 548.3 412.1 543.1 406.4 538.0 401.7 532.9 394.0 522.6 388.1 512.3 383.4 502.0 379.6 491.7 375.3 476.5 370.1 449.7 367.7 430.0 365.3 404.3 363.0 358.0 361.6 296.3 360.9 208.9 360.6 70.0 543.0 70.0Z" fill="#84ffc7"/>
<path d="M539.6 70.0 539.9 152.3 540.6 203.7 541.9 244.9 543.8 275.7 546.7 301.4 550.8 323.2 553.3 332.3 556.9 342.6 561.1 351.8 564.7 358.0 571.4 367.0 576.6 372.2 584.6 378.6 593.1 383.7 604.8 388.9 617.9 393.0 628.2 395.4 643.7 398.1 659.2 400.0 674.7 401.4 695.3 402.7 721.1 403.7 783.1 404.8 876.0 405.2 876.0 582.6 710.8 582.2 617.9 581.1 581.8 580.0 556.0 578.8 530.2 577.0 504.3 574.3 483.7 571.0 468.2 567.7 452.7 563.4 437.2 557.3 426.9 551.9 421.1 548.3 414.2 543.1 408.4 538.0 403.4 532.9 395.5 522.6 390.8 514.8 384.7 502.0 380.5 490.6 375.3 471.8 370.1 442.6 366.3 404.3 365.0 383.8 363.9 358.0 362.5 296.3 361.7 208.9 361.5 70.0 539.6 70.0Z" fill="#79ffd2"/>
<path d="M536.2 70.0 536.5 152.3 537.2 208.9 538.5 250.0 540.5 280.9 542.1 296.3 544.3 311.7 546.3 322.0 548.8 332.3 550.8 338.9 554.1 347.7 559.2 358.0 562.4 363.1 566.3 368.5 570.8 373.4 576.4 378.6 583.7 383.7 592.1 388.4 602.4 392.7 612.7 396.0 626.2 399.1 638.6 401.3 654.0 403.3 669.5 404.7 690.2 406.0 716.0 407.0 777.9 408.1 876.0 408.5 876.0 581.8 710.8 581.3 617.9 580.2 581.8 579.2 561.1 578.2 535.3 576.4 509.5 573.9 483.7 569.9 468.2 566.5 452.7 562.1 443.2 558.6 437.2 555.9 426.9 550.4 416.3 543.1 410.3 538.0 405.2 532.9 400.8 527.7 395.9 520.9 390.8 512.2 385.6 501.2 380.5 486.8 376.3 471.1 373.3 455.7 370.2 435.1 367.3 404.3 365.0 363.1 363.4 296.3 362.6 208.9 362.4 70.0 536.2 70.0Z" fill="#6effde"/>
<path d="M532.8 70.0 533.1 157.4 533.9 214.0 535.2 255.1 537.3 286.0 540.5 312.7 543.2 327.1 545.6 336.7 549.3 347.7 551.4 352.9 556.0 361.9 560.1 368.3 566.3 375.8 575.2 383.7 583.0 388.9 592.1 393.4 602.4 397.3 612.7 400.3 623.1 402.6 638.6 405.2 654.0 407.0 674.7 408.7 716.0 410.5 777.9 411.5 876.0 411.9 876.0 580.9 710.8 580.5 617.9 579.3 586.9 578.4 556.0 576.9 530.2 575.0 509.5 572.8 483.7 568.9 468.2 565.4 461.9 563.7 447.6 558.9 437.2 554.5 426.0 548.3 418.5 543.1 412.3 538.0 407.1 532.9 402.7 527.7 395.9 518.4 390.8 509.3 385.6 497.8 380.5 482.6 377.5 471.1 375.3 460.9 372.0 440.3 370.1 425.6 368.3 404.3 365.8 358.0 364.3 301.4 363.5 214.0 363.2 70.0 532.8 70.0Z" fill="#63ffe9"/>
<path d="M529.5 70.0 529.7 157.4 530.4 214.0 531.7 255.1 534.0 291.1 537.2 316.9 539.1 327.1 541.5 337.4 544.6 347.7 548.7 358.0 551.3 363.1 556.0 370.7 561.1 377.4 567.5 383.7 576.6 390.5 586.9 396.1 597.3 400.2 607.6 403.3 617.9 405.7 633.4 408.3 648.9 410.2 664.4 411.6 685.0 412.8 710.8 413.8 772.8 414.9 876.0 415.2 876.0 580.0 716.0 579.6 628.2 578.6 592.1 577.5 561.1 576.2 530.2 574.0 514.7 572.4 489.8 568.9 473.4 565.4 457.9 561.1 450.2 558.6 442.4 555.3 437.2 553.0 428.6 548.3 420.9 543.1 414.5 538.0 409.1 532.9 400.5 522.6 395.9 515.7 390.8 506.3 385.6 494.2 380.5 478.1 376.5 460.9 374.6 450.6 371.8 430.0 369.7 409.4 368.0 383.7 366.8 358.0 365.2 296.3 364.4 214.0 364.1 70.0 529.5 70.0Z" fill="#58fff4"/>
<path d="M526.1 70.0 526.4 157.4 527.0 214.0 528.2 255.1 530.3 291.1 531.9 306.6 534.1 322.0 536.0 332.3 538.6 342.6 540.5 349.0 543.8 358.0 548.8 368.3 552.0 373.4 556.0 378.8 560.4 383.7 566.1 388.9 573.3 394.0 581.8 398.7 592.1 403.0 602.4 406.2 617.9 409.7 633.4 412.2 664.4 415.2 710.8 417.2 772.8 418.2 876.0 418.6 876.0 579.1 716.0 578.6 623.1 577.4 586.9 576.3 556.0 574.9 535.3 573.4 509.5 570.6 494.0 568.4 471.3 563.7 454.1 558.6 441.3 553.4 431.4 548.3 423.4 543.1 416.7 538.0 411.4 533.1 406.4 527.7 401.1 520.9 395.9 513.0 390.3 502.0 385.6 490.4 380.5 473.2 377.7 460.9 374.9 445.4 372.3 424.9 370.1 402.3 367.6 352.9 366.1 291.1 365.4 208.9 365.0 70.0 526.1 70.0Z" fill="#4dffff"/>
<path d="M522.8 70.0 523.1 162.6 523.7 219.1 525.0 262.4 527.1 296.3 530.2 322.0 533.0 337.4 535.3 346.6 537.2 352.9 541.1 363.1 545.6 372.1 549.8 378.6 556.0 386.0 564.9 394.0 572.8 399.1 581.8 403.6 592.1 407.5 602.4 410.5 612.7 412.8 628.2 415.3 659.2 418.4 705.7 420.5 767.6 421.5 876.0 421.9 876.0 578.0 716.0 577.6 623.1 576.4 586.9 575.3 558.2 574.0 530.2 571.8 509.5 569.5 488.9 566.2 473.4 562.9 458.2 558.6 442.4 552.3 432.1 547.0 426.0 543.1 419.1 538.0 413.4 532.9 408.5 527.7 401.1 518.3 395.9 510.0 389.6 496.9 385.6 486.3 380.5 467.9 375.3 440.2 372.9 419.7 371.0 399.1 369.7 378.6 368.6 352.9 367.1 291.1 366.4 208.9 366.1 70.0 522.8 70.0Z" fill="#4df4ff"/>
<path d="M519.5 70.0 519.7 162.6 520.3 219.1 521.4 260.3 523.5 296.3 525.0 311.7 527.1 327.1 528.9 337.4 531.3 347.7 534.4 358.0 538.5 368.3 541.1 373.4 545.6 380.9 550.8 387.5 557.3 394.0 566.3 400.7 576.6 406.2 586.9 410.3 597.3 413.4 612.7 416.8 628.2 419.1 643.7 420.8 664.4 422.3 710.8 424.0 772.8 424.9 876.0 425.2 876.0 577.0 716.0 576.6 623.1 575.4 566.3 573.3 540.5 571.6 513.2 568.9 488.9 565.0 473.4 561.5 457.9 557.0 448.4 553.4 442.4 550.7 432.1 545.2 421.6 538.0 411.4 528.7 406.3 522.7 402.4 517.4 395.9 506.9 390.8 496.0 385.6 481.9 382.7 471.1 379.2 455.7 375.8 435.1 372.2 399.1 369.8 358.0 368.2 291.1 367.4 208.9 367.1 70.0 519.5 70.0Z" fill="#4de9ff"/>
<path d="M516.2 70.0 516.4 162.6 517.1 224.3 518.2 265.4 520.3 301.4 521.8 316.9 524.0 332.3 525.9 342.6 528.4 352.9 533.6 368.3 538.6 378.6 541.8 383.7 545.6 388.9 550.2 394.0 555.9 399.1 563.2 404.3 571.4 408.8 581.8 413.1 592.1 416.3 607.6 419.8 623.1 422.2 638.6 423.9 659.2 425.5 705.7 427.3 767.6 428.2 876.0 428.4 876.0 576.0 721.1 575.6 628.2 574.5 597.3 573.6 566.3 572.2 540.5 570.4 519.8 568.4 494.0 564.6 478.5 561.4 463.0 557.2 452.7 553.6 447.6 551.4 440.9 548.3 432.1 543.4 424.3 538.0 418.1 532.9 412.8 527.7 404.4 517.4 400.9 512.3 395.2 502.0 390.6 491.7 385.4 476.3 380.5 455.8 378.7 445.4 375.3 421.2 373.7 404.3 370.9 358.0 369.4 301.4 368.5 214.0 368.1 70.0 516.2 70.0Z" fill="#4ddeff"/>
<path d="M512.9 70.0 513.1 167.7 513.8 229.4 514.9 270.6 517.1 306.6 520.1 332.3 521.9 342.6 525.0 356.2 527.1 363.1 530.9 373.4 535.3 382.2 539.6 388.9 545.6 396.2 550.8 401.1 554.7 404.3 562.7 409.4 571.4 413.8 581.8 417.7 592.1 420.6 602.4 422.8 617.9 425.3 633.4 427.1 654.0 428.7 700.5 430.6 767.6 431.5 876.0 431.7 876.0 574.9 721.1 574.6 633.4 573.5 597.3 572.4 566.3 571.0 535.6 568.9 519.8 567.1 496.1 563.7 478.5 560.0 472.7 558.6 457.9 553.9 447.6 549.7 434.9 543.1 426.9 537.9 420.6 532.9 415.2 527.7 406.3 517.3 401.1 509.5 395.9 500.0 390.8 487.9 385.6 471.8 381.9 455.7 379.9 445.4 377.0 424.9 374.9 404.3 373.1 378.6 371.9 352.9 370.2 291.1 369.5 208.9 369.2 70.0 512.9 70.0Z" fill="#4dd2ff"/>
<path d="M509.7 70.0 509.8 172.9 510.5 234.6 511.9 280.9 513.9 311.7 515.5 327.1 517.8 342.6 519.9 352.9 522.6 363.1 525.0 370.5 528.3 378.6 533.8 388.9 537.4 394.0 541.7 399.1 545.6 403.0 550.8 407.3 556.0 410.9 566.3 416.4 576.6 420.5 586.9 423.5 602.4 426.8 617.9 429.1 633.4 430.8 654.0 432.2 700.5 434.0 767.6 434.8 876.0 435.0 876.0 573.9 721.1 573.4 628.2 572.2 592.1 571.1 561.1 569.5 540.5 568.0 514.7 565.2 499.2 562.8 478.5 558.6 461.2 553.4 448.3 548.3 437.2 542.6 430.1 538.0 423.4 532.9 417.7 527.7 412.8 522.6 406.3 514.2 401.1 506.2 395.9 496.1 390.8 483.3 385.6 466.0 380.4 440.3 377.8 419.7 375.3 394.4 372.9 347.7 371.4 286.0 370.6 203.7 370.2 70.0 509.7 70.0Z" fill="#4dc7ff"/>
<path d="M506.4 70.0 506.5 172.9 507.1 234.6 508.4 280.9 510.7 316.9 512.4 332.3 514.7 347.3 516.9 358.0 519.7 368.3 523.4 378.6 525.6 383.7 530.2 391.9 535.3 399.1 540.5 404.9 545.6 409.4 550.8 413.2 556.0 416.4 566.3 421.3 576.6 425.0 586.9 427.8 602.4 430.8 617.9 432.9 633.4 434.4 654.0 435.8 700.5 437.3 767.6 438.1 876.0 438.3 876.0 572.7 721.1 572.2 628.2 571.0 592.1 569.9 566.3 568.6 540.5 566.7 514.7 563.9 494.0 560.4 478.5 556.9 463.0 552.3 452.7 548.4 447.6 546.0 437.2 540.4 426.2 532.9 416.6 524.0 411.4 518.1 407.1 512.3 401.1 502.6 395.8 491.7 390.8 478.3 385.9 460.9 382.8 445.4 380.5 431.1 376.6 394.0 375.3 375.3 374.1 347.7 372.6 286.0 371.8 203.7 371.4 70.0 506.4 70.0Z" fill="#4dbcff"/>
<path d="M503.1 70.0 503.2 172.9 503.7 234.6 504.9 280.9 507.0 316.9 508.5 332.3 510.7 347.7 512.7 358.0 515.2 368.3 520.6 383.7 525.0 392.6 530.2 400.5 535.3 406.6 540.5 411.5 544.3 414.6 552.2 419.7 561.1 424.1 571.4 427.9 581.8 430.8 597.3 433.9 612.7 436.1 628.2 437.6 648.9 439.0 695.3 440.6 762.4 441.4 876.0 441.6 876.0 571.5 721.1 571.0 633.4 569.9 597.3 568.9 576.6 567.9 550.8 566.2 524.5 563.7 504.3 560.7 488.9 557.8 471.7 553.4 457.0 548.3 442.4 541.3 436.7 538.0 429.4 532.9 421.8 526.4 416.6 521.1 411.4 515.0 405.9 507.1 400.2 496.9 395.6 486.6 390.3 471.1 385.6 452.4 383.4 440.3 380.5 420.2 378.4 399.1 376.6 373.4 375.3 348.6 373.9 296.3 373.0 208.9 372.7 70.0 503.1 70.0Z" fill="#4db1ff"/>
<path d="M499.7 70.0 499.9 178.0 500.4 239.7 501.6 286.0 503.3 316.9 504.7 332.3 506.7 347.7 508.5 358.0 510.8 368.3 513.8 378.6 517.8 388.9 523.3 399.1 526.9 404.3 531.1 409.4 535.3 413.6 540.5 417.8 545.6 421.4 556.0 426.8 566.3 430.8 576.6 433.8 592.1 437.1 607.6 439.3 623.1 440.9 643.7 442.3 690.2 443.9 757.3 444.7 876.0 444.9 876.0 570.3 726.3 569.8 638.6 568.8 602.4 567.7 571.4 566.2 540.5 564.0 525.0 562.2 500.3 558.6 483.7 554.9 477.7 553.4 463.0 548.7 452.7 544.4 440.5 538.0 432.1 532.4 426.2 527.7 420.7 522.6 411.9 512.3 406.3 503.9 401.1 494.5 395.9 482.5 390.8 466.8 386.9 450.6 384.9 440.3 382.0 419.7 379.8 399.1 376.9 352.9 375.1 296.3 374.2 208.9 373.9 70.0 499.7 70.0Z" fill="#4da6ff"/>
<path d="M496.4 70.0 496.5 183.1 497.1 244.9 498.3 291.1 500.5 327.1 502.1 342.6 504.3 357.8 506.5 368.3 509.2 378.6 512.8 388.9 515.0 394.0 519.8 402.8 524.5 409.4 530.2 415.6 535.3 420.2 540.5 423.9 545.6 427.0 556.0 431.9 566.3 435.5 576.6 438.2 592.1 441.1 607.6 443.1 623.1 444.6 643.7 445.9 690.2 447.4 757.3 448.0 876.0 448.2 876.0 569.1 731.5 568.6 638.6 567.4 602.4 566.3 571.4 564.8 550.8 563.4 525.0 560.7 509.5 558.5 484.5 553.4 467.4 548.3 454.6 543.1 444.5 538.0 437.2 533.5 432.1 529.7 423.8 522.6 414.6 512.3 410.8 507.1 406.3 499.9 401.1 489.9 395.9 477.1 391.0 460.9 385.6 435.0 382.9 414.6 380.8 394.0 378.1 347.7 376.3 286.0 375.4 198.6 375.1 70.0 496.4 70.0Z" fill="#4d9bff"/>
<path d="M493.1 70.0 493.2 183.1 493.6 244.9 494.7 291.1 496.7 327.1 498.2 342.6 500.3 358.0 502.2 368.3 504.6 378.6 507.8 388.9 512.2 399.1 515.0 404.3 519.8 411.6 527.1 419.7 533.1 424.9 541.0 430.0 550.8 434.8 561.1 438.5 571.4 441.3 586.9 444.4 602.4 446.4 617.9 447.9 638.6 449.2 685.0 450.7 752.1 451.4 876.0 451.5 876.0 567.7 726.3 567.2 633.4 565.9 576.0 563.7 550.8 561.8 525.0 559.1 509.5 556.8 492.2 553.4 473.3 548.3 459.6 543.1 447.6 537.3 440.3 532.9 433.1 527.7 426.9 522.5 421.8 517.3 416.6 511.3 410.1 502.0 404.4 491.7 399.7 481.4 394.4 466.0 390.8 452.4 386.6 430.0 384.5 414.6 382.4 394.0 380.5 368.9 379.7 352.9 377.8 286.0 376.9 203.7 376.5 70.0 493.1 70.0Z" fill="#4d8fff"/>
<path d="M489.7 70.0 490.1 244.9 491.1 291.1 492.9 327.1 494.2 342.6 496.1 358.0 500.1 378.6 503.0 388.9 506.8 399.1 512.2 409.4 515.6 414.6 519.8 419.8 524.9 424.9 530.2 429.0 535.3 432.5 545.6 437.8 556.0 441.7 566.3 444.6 581.8 447.7 597.3 449.8 612.7 451.3 633.4 452.6 679.8 454.1 747.0 454.8 876.0 454.9 876.0 566.2 726.3 565.7 638.6 564.6 608.2 563.7 581.8 562.4 556.0 560.6 533.9 558.6 514.7 555.8 499.2 553.0 480.1 548.3 463.0 542.2 452.7 537.5 444.6 532.9 436.9 527.7 426.9 519.1 421.8 513.7 416.6 507.4 411.4 499.8 406.3 490.7 401.1 479.3 395.9 464.4 391.2 445.4 389.2 435.1 385.6 410.8 384.0 394.0 382.1 368.3 380.7 342.6 379.3 291.1 378.4 208.9 377.9 70.0 489.7 70.0Z" fill="#4d84ff"/>
<path d="M486.2 70.0 486.7 250.0 487.6 296.3 489.4 332.3 490.8 347.7 492.7 363.1 494.5 373.4 496.7 383.7 499.7 394.0 503.7 404.3 509.3 414.6 512.9 419.7 519.8 427.4 525.0 431.8 530.2 435.4 535.3 438.4 545.6 443.0 556.0 446.5 566.3 449.1 581.8 451.9 597.3 453.8 633.4 456.3 679.8 457.7 747.0 458.3 876.0 458.3 876.0 564.8 731.5 564.3 648.9 563.3 612.7 562.2 581.8 560.8 550.8 558.6 535.3 556.9 511.2 553.4 494.0 549.8 487.8 548.3 473.4 543.8 463.0 539.7 449.3 532.9 441.3 527.7 434.6 522.6 428.8 517.4 419.6 507.1 415.8 502.0 411.4 495.1 406.3 485.4 401.1 473.1 397.2 460.9 394.4 450.6 390.8 433.5 388.0 414.6 385.6 394.3 383.7 368.3 382.4 342.6 380.5 280.9 379.7 198.6 379.4 70.0 486.2 70.0Z" fill="#4d79ff"/>
<path d="M482.7 70.0 483.1 255.1 484.1 301.4 485.9 337.4 487.2 352.9 489.2 368.3 491.0 378.6 494.0 391.5 496.4 399.1 500.5 409.4 504.3 416.7 510.0 424.9 514.7 430.0 519.8 434.6 525.0 438.4 530.2 441.5 540.5 446.3 550.8 449.9 561.1 452.5 576.6 455.4 592.1 457.3 607.6 458.7 628.2 459.9 674.7 461.2 741.8 461.7 876.0 461.8 876.0 563.3 726.3 562.7 638.6 561.3 602.4 560.1 572.6 558.6 550.8 556.7 530.2 554.3 514.7 551.9 496.6 548.3 478.4 543.1 465.1 538.0 452.7 531.8 446.0 527.7 438.9 522.6 432.1 516.7 426.9 511.5 421.8 505.5 415.6 496.9 409.7 486.6 405.0 476.3 401.1 466.1 399.5 460.9 395.9 448.0 391.4 424.9 389.2 409.4 387.0 388.9 385.6 372.2 384.1 342.6 382.3 280.9 381.3 198.6 380.9 70.0 482.7 70.0Z" fill="#4d6eff"/>
<path d="M479.2 70.0 479.5 260.3 480.4 306.6 482.2 342.6 483.6 358.0 485.6 373.4 488.4 388.9 491.1 399.1 494.0 407.5 497.1 414.6 503.0 424.9 507.0 430.0 511.9 435.1 519.8 441.6 530.2 447.5 540.5 451.8 550.8 454.9 561.1 457.2 576.6 459.7 592.1 461.5 628.2 463.7 674.7 464.9 741.8 465.3 876.0 465.3 876.0 561.5 731.5 561.0 643.7 559.8 607.6 558.7 586.9 557.6 561.1 555.7 538.4 553.4 519.8 550.6 504.3 547.7 486.6 543.1 471.9 538.0 460.5 532.9 447.6 525.2 437.2 517.4 426.9 507.1 421.8 500.7 416.6 493.1 411.4 483.9 406.3 472.6 402.1 460.9 395.9 437.8 392.0 414.6 390.0 399.1 387.7 373.4 386.0 347.7 384.3 296.3 383.1 208.9 382.7 70.0 479.2 70.0Z" fill="#4d63ff"/>
<path d="M475.6 70.0 475.5 203.7 475.9 270.6 476.9 316.9 478.9 352.9 480.4 368.3 482.6 383.7 484.7 394.0 487.4 404.3 491.1 414.6 494.0 420.9 499.2 429.5 503.6 435.1 509.5 441.0 515.2 445.4 525.0 451.2 535.3 455.5 545.6 458.6 556.0 461.0 571.4 463.5 586.9 465.2 623.1 467.5 669.5 468.6 736.6 469.0 876.0 469.0 876.0 559.8 736.6 559.3 654.0 558.2 617.9 557.1 586.9 555.5 557.8 553.4 540.5 551.4 519.1 548.3 495.9 543.1 479.6 538.0 468.2 533.3 457.4 527.7 449.3 522.6 442.4 517.5 436.5 512.3 426.9 502.1 421.8 495.2 416.6 487.1 411.4 477.2 406.3 464.9 403.3 455.7 400.3 445.4 395.9 425.6 392.8 404.3 390.8 387.0 389.0 363.1 387.6 337.4 385.6 276.6 384.8 193.4 384.4 70.0 475.6 70.0Z" fill="#4d58ff"/>
<path d="M471.8 70.0 472.0 275.7 473.0 322.0 474.9 358.0 476.4 373.4 478.6 388.9 480.6 399.1 483.3 409.4 487.0 419.7 489.4 424.9 494.0 432.8 499.2 439.6 505.1 445.4 511.8 450.6 519.8 455.2 530.2 459.5 540.5 462.7 550.8 465.0 566.3 467.5 581.8 469.2 617.9 471.3 664.4 472.4 731.5 472.8 876.0 472.7 876.0 558.0 736.6 557.4 648.9 556.0 612.7 554.8 585.1 553.4 561.1 551.4 540.5 549.1 525.0 546.7 507.1 543.1 488.7 538.0 475.1 532.9 463.0 527.0 455.6 522.6 448.2 517.4 441.9 512.3 431.6 502.0 426.9 496.2 421.8 488.8 416.6 480.1 411.4 469.4 406.3 455.9 401.1 437.6 398.5 424.9 395.9 410.4 393.4 388.9 391.0 363.1 390.1 347.7 387.9 286.0 386.8 203.7 386.2 70.0 471.8 70.0Z" fill="#4d4dff"/>
<path d="M468.0 70.0 468.0 275.7 468.8 322.0 470.3 358.0 471.6 373.4 473.4 388.9 475.2 399.1 477.5 409.4 480.6 419.7 484.9 430.0 488.9 436.9 494.0 443.9 500.7 450.6 507.7 455.7 514.7 459.6 525.0 464.0 535.3 467.1 545.6 469.4 561.1 471.8 576.6 473.4 612.7 475.4 659.2 476.4 876.0 476.5 876.0 555.8 741.8 555.3 654.0 554.1 628.2 553.3 597.3 551.8 571.4 549.9 550.8 547.8 519.8 543.0 499.5 538.0 483.7 532.6 472.5 527.7 463.0 522.6 455.1 517.4 448.3 512.3 442.4 507.2 437.2 502.0 432.1 496.1 426.9 489.3 421.8 481.5 416.6 472.0 411.4 460.3 408.1 450.6 406.3 445.1 401.1 424.0 397.8 404.3 395.8 388.9 392.1 342.6 390.8 314.5 390.1 291.1 388.9 203.7 388.4 70.0 468.0 70.0Z" fill="#4d4df4"/>
<path d="M463.9 70.0 463.9 291.1 464.7 337.4 466.2 368.3 467.5 383.7 469.5 399.1 471.4 409.4 473.9 419.7 477.4 430.0 479.7 435.1 483.7 442.3 488.9 449.3 495.3 455.7 502.4 460.9 509.5 464.8 519.8 469.0 530.2 472.0 540.5 474.2 556.0 476.4 571.4 478.0 607.6 479.8 654.0 480.6 876.0 480.5 876.0 553.7 741.8 553.2 654.0 551.7 617.9 550.3 586.9 548.6 566.3 546.7 545.6 544.2 535.3 542.7 512.7 538.0 495.4 532.9 482.4 527.7 472.0 522.6 463.4 517.4 456.1 512.3 447.6 505.1 437.2 494.6 432.1 488.3 427.1 481.4 421.8 472.5 416.6 462.2 411.4 449.2 406.3 431.9 402.6 414.6 400.7 404.3 397.5 378.6 395.9 362.6 394.4 337.4 393.1 306.6 392.0 270.6 390.9 188.3 390.5 70.0 463.9 70.0Z" fill="#4d4de9"/>
<path d="M459.7 70.0 459.4 296.3 460.0 342.6 461.2 373.4 462.3 388.9 464.1 404.3 465.8 414.6 468.1 424.9 471.3 435.1 473.4 440.3 478.5 449.7 483.0 455.7 488.1 460.9 494.0 465.5 499.2 468.6 509.5 473.2 519.8 476.4 530.2 478.7 545.6 481.0 561.1 482.6 592.1 484.2 638.6 485.0 876.0 484.8 876.0 551.1 741.8 550.5 659.2 549.2 630.2 548.3 607.6 547.0 581.8 545.1 561.1 543.1 529.5 538.0 509.2 532.9 494.5 527.7 483.1 522.6 473.9 517.4 466.1 512.3 453.1 502.0 442.4 491.3 432.1 478.4 426.9 470.7 421.8 461.4 416.6 450.0 411.4 435.4 406.3 415.2 401.1 383.5 399.1 363.1 397.2 337.4 395.9 314.9 395.0 286.0 393.7 203.7 393.1 70.0 459.7 70.0Z" fill="#4d4dde"/>
<path d="M455.1 70.0 454.5 316.9 454.9 358.0 456.0 388.9 458.3 414.6 459.7 424.9 461.8 435.1 464.8 445.4 468.2 453.4 472.6 460.9 476.9 466.0 482.7 471.1 488.9 475.1 494.0 477.6 504.3 481.2 514.7 483.8 525.0 485.5 540.5 487.3 556.0 488.4 586.9 489.5 628.2 490.0 876.0 489.3 876.0 548.5 747.0 547.8 659.2 546.1 628.2 544.9 597.2 543.1 576.6 541.1 552.3 538.0 527.3 532.9 510.3 527.7 497.7 522.6 487.7 517.4 479.6 512.3 472.6 507.1 466.4 502.0 455.4 491.7 442.4 478.1 437.2 471.9 432.1 465.0 426.9 456.8 421.8 446.9 416.6 434.4 411.4 417.5 408.6 404.3 406.3 392.5 403.2 368.3 401.1 347.8 399.8 327.1 397.5 265.4 396.2 183.1 395.7 70.0 455.1 70.0Z" fill="#4d4dd2"/>
<path d="M876.0 496.9 876.0 545.1 757.3 544.5 674.7 543.2 628.2 541.1 586.6 538.0 552.3 532.9 531.7 527.7 517.7 522.6 507.6 517.4 500.2 512.3 495.0 507.1 492.3 502.0 494.0 498.0 495.3 496.9 499.2 496.0 509.5 495.3 586.9 495.8 876.0 494.3 876.0 496.9ZM450.2 70.0 448.6 358.0 449.1 435.1 448.4 445.4 447.6 449.3 446.4 450.6 442.4 452.3 437.2 449.6 432.1 444.5 426.9 437.1 421.8 427.0 416.6 413.0 411.4 392.5 406.3 358.3 403.1 316.9 401.0 270.6 399.7 188.3 399.1 70.0 450.2 70.0Z" fill="#4d4dc7"/>
<path d="M876.0 502.0 876.0 541.2 777.9 540.6 705.7 539.5 654.5 538.0 617.9 535.4 592.0 532.9 563.9 527.7 547.9 522.6 539.1 517.4 537.3 512.3 540.5 510.3 545.6 508.1 548.9 507.1 556.0 506.2 581.8 504.1 623.1 502.4 721.1 500.8 876.0 499.9 876.0 502.0ZM444.5 70.0 443.5 239.7 442.5 301.4 441.5 337.4 439.6 373.4 437.5 394.0 436.2 399.1 434.0 404.3 432.1 407.4 426.9 405.6 421.8 396.9 416.6 380.9 411.4 352.9 408.9 327.1 406.3 290.6 404.7 239.7 403.7 167.7 403.1 70.0 444.5 70.0Z" fill="#4d4dbc"/>
<path d="M876.0 507.1 876.0 535.8 757.3 534.7 710.8 533.7 679.8 532.6 648.9 530.2 623.8 527.7 602.5 522.6 600.4 517.4 612.7 514.5 626.3 512.3 674.7 509.7 716.0 508.5 772.8 507.5 870.8 506.8 876.0 506.8 876.0 507.1ZM437.6 70.0 436.6 188.3 435.8 234.6 434.5 275.7 432.1 318.8 429.8 332.3 426.9 344.6 421.8 342.5 416.6 321.2 414.1 296.3 411.7 265.4 410.6 234.6 409.6 188.3 408.5 70.0 437.6 70.0Z" fill="#4d4db1"/>
<path d="M334.5 70.5 334.5 275.5 339.5 280.5 339.5 440.5 344.5 445.5 344.5 481.5 349.5 486.5 349.5 502.5 354.5 507.5 354.5 522.5 359.5 527.5 359.5 532.5 364.5 538.5 364.5 543.5 401.5 579.5 406.5 579.5 411.5 584.5 416.5 584.5 421.5 589.5 437.5 589.5 442.5 594.5 457.5 594.5 463.5 599.5 499.5 599.5 504.5 604.5 664.5 604.5 669.5 609.5 875.5 609.5 876.0 610.0 334.0 610.0 Z M726.5 70.5 726.5 116.5 731.5 121.5 731.5 141.5 736.5 147.5 736.5 157.5 741.5 162.5 741.5 167.5 746.5 172.5 746.5 178.5 767.5 198.5 772.5 198.5 777.5 203.5 783.5 203.5 788.5 208.5 798.5 208.5 803.5 214.5 824.5 214.5 829.5 219.5 875.5 219.5 876.0 70.0 876.0 70.0 Z" fill="#b04c4c"/>
<path d="M385.5 70.0V610.0M334.0 558.5H876.0M437.5 70.0V610.0M334.0 507.5H876.0M488.5 70.0V610.0M334.0 455.5H876.0M540.5 70.0V610.0M334.0 404.5H876.0M592.5 70.0V610.0M334.0 352.5H876.0M643.5 70.0V610.0M334.0 301.5H876.0M695.5 70.0V610.0M334.0 249.5H876.0M746.5 70.0V610.0M334.0 198.5H876.0M798.5 70.0V610.0M334.0 147.5H876.0M850.5 70.0V610.0M334.0 95.5H876.0" stroke="#000" stroke-opacity="0.065" stroke-width="1" fill="none"/>
<path d="M334.5 610.0V605.0M334.0 610.5H339.0M385.5 610.0V605.0M334.0 558.5H339.0M437.5 610.0V605.0M334.0 507.5H339.0M488.5 610.0V605.0M334.0 455.5H339.0M540.5 610.0V605.0M334.0 404.5H339.0M592.5 610.0V605.0M334.0 352.5H339.0M643.5 610.0V605.0M334.0 301.5H339.0M695.5 610.0V605.0M334.0 249.5H339.0M746.5 610.0V605.0M334.0 198.5H339.0M798.5 610.0V605.0M334.0 147.5H339.0M850.5 610.0V605.0M334.0 95.5H339.0" stroke="#650b0b" stroke-width="1" fill="none" shape-rendering="crispEdges"/>
<g fill="none" stroke-width="1" shape-rendering="crispEdges"><path d="M876.0 544.6 767.6 544.1 691.8 543.1 638.6 541.1 593.0 538.0 556.6 532.9 535.3 527.7 521.1 522.6 511.0 517.4 503.9 512.3 499.5 507.1 498.8 502.0 504.3 499.0 509.5 497.9 525.0 497.0 741.8 495.5 876.0 495.0M449.4 70.0 448.9 203.7 447.4 419.7 446.5 435.1 445.4 440.3 442.4 445.8 437.2 445.1 432.1 440.7 426.9 433.6 421.8 423.6 416.6 409.4 411.4 388.2 406.3 351.9 403.2 306.6 401.1 253.5 400.1 178.0 399.6 70.0" stroke="#0000af"/>
<path d="M876.0 562.4 736.6 561.9 648.9 560.7 587.0 558.6 561.1 556.7 540.5 554.6 525.0 552.6 501.4 548.3 482.3 543.1 468.3 538.0 457.4 532.9 447.6 527.0 437.2 519.3 429.7 512.3 421.8 503.2 414.1 491.7 411.2 486.6 406.3 476.3 402.4 466.0 399.2 455.7 395.3 440.3 390.8 414.6 389.0 399.1 385.6 358.0 384.3 327.1 383.3 291.1 382.3 208.9 381.8 70.0M481.0 70.0 481.0 198.6 481.5 265.4 482.6 311.7 484.7 347.7 486.3 363.1 488.7 378.6 490.9 388.9 493.8 399.1 497.7 409.4 500.1 414.6 504.3 421.7 510.8 430.0 516.1 435.1 525.0 441.6 532.0 445.4 540.5 449.0 550.8 452.4 561.1 454.8 576.6 457.5 592.1 459.4 628.2 461.8 674.7 463.0 741.8 463.5 876.0 463.6" stroke="#0030ff"/>
<path d="M876.0 572.9 731.5 572.5 643.7 571.5 576.6 569.4 556.0 568.1 535.3 566.4 512.1 563.7 499.2 561.6 484.0 558.6 465.4 553.4 451.8 548.3 441.3 543.1 432.1 537.5 425.8 532.9 420.0 527.7 411.4 518.5 406.8 512.3 403.5 507.1 400.5 502.0 395.9 492.6 391.6 481.4 387.0 466.0 384.6 455.7 380.5 432.5 378.3 414.6 375.0 373.4 373.7 342.6 372.8 306.6 371.7 219.1 371.3 70.0M506.8 70.0 507.0 178.0 507.7 239.7 509.1 286.0 511.7 322.0 513.6 337.4 516.4 352.9 518.8 363.1 522.1 373.4 526.4 383.7 530.2 390.6 535.3 398.0 540.5 403.9 546.8 409.4 554.2 414.6 561.1 418.3 571.4 422.6 581.8 425.9 592.1 428.3 607.6 431.0 623.1 432.9 659.2 435.5 705.7 436.9 767.6 437.6 876.0 437.8" stroke="#009fff"/>
<path d="M876.0 580.7 721.1 580.3 628.2 579.3 566.3 577.2 521.2 574.0 504.3 571.9 484.8 568.9 463.0 563.8 452.7 560.5 447.3 558.6 437.2 554.2 426.9 548.6 419.0 543.1 411.4 536.7 403.0 527.7 395.9 517.9 390.8 508.7 385.5 496.9 380.4 481.4 375.5 460.9 373.0 445.4 370.1 423.5 366.9 378.6 364.8 316.9 363.8 224.3 363.4 70.0M532.1 70.0 532.4 162.6 533.2 219.1 535.0 265.4 537.5 296.3 539.5 311.7 542.3 327.1 544.9 337.4 548.3 347.7 552.7 358.0 556.0 363.9 561.1 371.4 566.3 377.3 573.5 383.7 581.0 388.9 586.9 392.1 597.3 396.5 607.6 399.9 617.9 402.4 633.4 405.3 648.9 407.3 679.8 409.8 726.3 411.5 783.1 412.3 876.0 412.6" stroke="#20ffdf"/>
<path d="M876.0 587.0 721.1 586.7 628.2 585.8 570.8 584.3 545.6 582.9 519.8 581.0 502.0 579.1 478.5 575.5 468.2 573.5 450.6 568.9 436.4 563.7 425.5 558.6 416.6 553.2 409.9 548.3 404.0 543.1 395.9 534.4 391.0 527.7 387.8 522.6 384.9 517.4 380.5 508.0 376.3 496.9 373.3 486.6 369.6 471.1 366.1 450.6 363.6 430.0 361.5 404.3 360.0 378.6 358.4 322.0 357.4 229.4 357.1 70.0M558.6 70.0 559.1 152.3 560.1 203.7 562.1 244.9 565.0 275.7 567.4 291.1 569.5 301.4 572.2 311.7 575.7 322.0 580.4 332.3 583.3 337.4 586.7 342.6 590.9 347.7 595.9 352.9 602.4 358.2 610.2 363.1 617.9 367.0 628.2 371.1 638.6 374.1 648.9 376.5 660.5 378.6 674.7 380.5 705.7 383.1 747.0 384.8 798.6 385.8 876.0 386.2" stroke="#8fff70"/>
<path d="M876.0 592.5 716.0 592.1 623.1 591.3 557.5 589.4 514.7 586.5 493.0 584.3 473.4 581.2 462.6 579.1 443.2 574.0 429.3 568.9 418.7 563.7 411.4 559.4 406.3 555.7 397.5 548.3 392.7 543.1 388.5 538.0 381.7 527.7 375.3 515.0 370.4 502.0 366.1 486.6 362.9 471.1 359.8 451.6 358.0 435.1 356.3 414.6 354.6 387.4 352.8 322.0 351.9 229.4 351.6 70.0M587.9 70.0 588.5 136.9 589.7 183.1 591.7 219.1 593.0 234.6 594.9 250.0 598.6 270.6 601.3 280.9 604.7 291.1 607.6 298.1 612.7 307.8 617.9 315.2 623.1 321.0 628.2 325.8 633.4 329.7 638.6 333.0 648.9 338.2 659.2 342.1 669.5 345.1 681.1 347.7 695.3 350.1 710.8 351.9 726.3 353.3 762.4 355.2 808.9 356.4 876.0 357.0" stroke="#ffef00"/>
<path d="M876.0 597.2 716.0 596.9 623.1 596.1 560.8 594.6 535.3 593.3 509.5 591.4 488.9 589.2 468.2 586.0 457.9 584.1 439.0 579.1 424.8 574.0 414.0 568.9 406.3 564.3 401.1 560.6 392.7 553.4 387.8 548.3 383.6 543.1 376.8 532.9 370.1 519.5 365.5 507.1 361.3 491.7 359.0 481.4 355.6 460.9 353.2 440.3 351.1 414.6 349.7 388.9 348.0 327.1 347.1 234.6 346.8 70.0M622.0 70.0 622.9 126.6 624.5 167.7 626.8 198.6 630.2 224.3 632.2 234.6 634.7 244.9 638.0 255.1 642.3 265.4 648.9 276.9 654.0 283.6 659.2 289.0 664.4 293.4 669.5 297.1 677.0 301.4 685.0 305.2 695.3 308.9 705.5 311.7 726.3 315.8 752.1 318.8 783.1 320.9 824.4 322.3 876.0 323.1" stroke="#ff8000"/>
<path d="M876.0 601.5 710.8 601.2 612.7 600.4 550.8 598.5 525.0 597.2 499.2 595.2 478.5 592.7 458.4 589.4 442.4 585.7 432.1 582.7 421.8 579.0 411.0 574.0 401.1 568.2 395.0 563.7 389.0 558.6 380.5 549.2 375.3 542.1 369.9 532.9 365.2 522.6 363.2 517.4 359.8 507.1 354.6 486.0 351.4 466.0 348.9 445.4 346.9 419.7 345.5 394.0 343.6 332.3 342.9 234.6 342.6 70.0M664.3 70.0 665.5 111.1 667.3 142.0 669.8 167.7 673.1 188.3 675.4 198.6 678.3 208.9 680.1 214.0 684.5 224.3 690.4 234.6 695.3 241.1 700.5 246.6 705.7 251.2 710.8 254.9 721.1 260.8 731.5 265.2 736.6 266.9 747.0 269.9 757.3 272.2 777.9 275.4 803.7 278.0 834.7 279.7 876.0 280.9" stroke="#ff0000"/>
<path d="M334.5 70.5 334.5 275.5 339.5 280.5 339.5 440.5 344.5 445.5 344.5 481.5 349.5 486.5 349.5 502.5 354.5 507.5 354.5 522.5 359.5 527.5 359.5 532.5 364.5 538.5 364.5 543.5 401.5 579.5 406.5 579.5 411.5 584.5 416.5 584.5 421.5 589.5 437.5 589.5 442.5 594.5 457.5 594.5 463.5 599.5 499.5 599.5 504.5 604.5 664.5 604.5 669.5 609.5 875.5 609.5M726.5 70.5 726.5 116.5 731.5 121.5 731.5 141.5 736.5 147.5 736.5 157.5 741.5 162.5 741.5 167.5 746.5 172.5 746.5 178.5 767.5 198.5 772.5 198.5 777.5 203.5 783.5 203.5 788.5 208.5 798.5 208.5 803.5 214.5 824.5 214.5 829.5 219.5 875.5 219.5" stroke="#800000"/></g>
<path d="M421.6 199.1 421.6 200.6 421.6 202.0 421.7 203.5 421.7 205.0 421.7 206.5 421.7 207.9 421.8 209.4 421.8 210.9 421.8 212.4 421.9 213.8 421.9 215.3 421.9 216.8 421.9 218.3 422.0 219.7 422.0 221.2 422.0 222.7 422.0 224.2 422.1 225.6 422.1 227.1 422.1 228.6 422.1 230.1 422.2 231.5 422.2 233.0 422.2 234.5 422.2 235.9 422.2 237.4 422.3 238.9 422.3 240.4 422.3 241.8 422.3 243.3 422.4 244.8 422.4 246.3 422.4 247.7 422.4 249.2 422.4 250.7 422.4 252.2 422.5 253.6 422.5 255.1 422.5 256.6 422.5 258.1 422.5 259.5 422.6 261.0 422.6 262.5 422.6 263.9 422.6 265.4 422.6 266.9 422.7 268.4 422.7 269.8 422.7 271.3 422.7 272.8 422.7 274.3 422.8 275.7 422.8 277.2 422.8 278.7 422.8 280.2 422.9 281.6 422.9 283.1 422.9 284.6 422.9 286.1 422.9 287.5 423.0 289.0 423.0 290.5 423.0 291.9 423.0 293.4 423.1 294.9 423.1 296.4 423.1 297.8 423.1 299.3 423.2 300.8 423.2 302.3 423.2 303.7 423.3 305.2 423.3 306.7 423.3 308.1 423.4 309.6 423.4 311.1 423.4 312.6 423.5 314.0 423.5 315.5 423.5 317.0 423.6 318.5 423.6 319.9 423.6 321.4 423.7 322.9 423.7 324.3 423.8 325.8 423.8 327.3 423.9 328.8 423.9 330.2 423.9 331.7 424.0 333.2 424.0 334.7 424.1 336.1 424.1 337.6 424.2 339.1 424.2 340.5 424.3 342.0 424.3 343.5 424.4 345.0 424.5 346.4 424.5 347.9 424.6 349.4 424.6 350.9 424.7 352.3 424.8 353.8 424.8 355.3 424.9 356.7 425.0 358.2 425.0 359.7 425.1 361.2 425.2 362.6 425.2 364.1 425.3 365.6 425.4 367.0 425.5 368.5 425.6 370.0 425.6 371.5 425.7 372.9 425.8 374.4 425.9 375.9 426.0 377.3 426.1 378.8 426.2 380.3 426.3 381.8 426.3 383.2 426.4 384.7 426.5 386.2 426.6 387.6 426.7 389.1 426.8 390.6 427.0 392.1 427.1 393.5 427.2 395.0 427.3 396.5 427.4 397.9 427.5 399.4 427.7 400.9 427.8 402.3 427.9 403.8 428.1 405.3 428.2 406.7 428.4 408.2 428.5 409.7 428.7 411.1 428.9 412.6 429.1 414.1 429.3 415.5 429.5 417.0 429.7 418.5 429.9 419.9 430.1 421.4 430.4 422.8 430.6 424.3 430.9 425.7 431.1 427.2 431.4 428.6 431.7 430.1 432.0 431.5 432.3 433.0 432.6 434.4 433.0 435.9 433.3 437.3 433.7 438.7 434.1 440.2 434.5 441.6 434.9 443.0 435.3 444.5 435.7 445.9 436.2 447.3 436.7 448.7 437.2 450.1 437.7 451.5 438.2 452.9 438.8 454.3 439.4 455.6 440.0 457.0 440.6 458.3 441.2 459.6 441.9 460.9 442.6 462.2 443.3 463.4 444.1 464.6 444.9 465.8 445.7 467.0 446.6 468.1 447.5 469.2 448.4 470.3 449.3 471.4 450.3 472.4 451.3 473.4 452.4 474.3 453.5 475.2 454.6 476.1 455.8 476.9 457.0 477.7 458.3 478.5 459.5 479.2 460.8 479.9 462.1 480.6 463.4 481.3 464.8 482.0 466.2 482.6 467.5 483.3 468.9 483.9 470.3 484.5 471.7 485.1 473.1 485.7 474.5 486.4 475.9 487.0 477.2 487.6 478.6 488.3 480.0 489.0 481.3 489.7 482.6 490.4 483.9 491.1 485.2 491.9 486.5 492.6 487.7 493.5 488.9 494.3 490.1 495.2 491.2 496.1 492.4 497.0 493.5 497.9 494.6 498.8 495.7 499.8 496.8 500.8 497.9 501.7 499.0 502.7 500.0 503.7 501.1 504.7 502.2 505.7 503.3 506.7 504.4 507.6 505.5 508.6 506.6 509.6 507.7 510.5 508.8 511.4 510.0 512.4 511.1 513.2 512.3 514.1 513.5 515.0 514.7 515.8 516.0 516.6 517.3 517.4 518.6 518.1 519.9 518.8 521.3 519.5 522.7 520.1 524.1 520.7 525.5 521.2 526.9 521.8 528.3 522.2 529.8 522.6 531.2 523.0 532.7 523.3 534.1 523.6 535.6 523.8 537.0 524.0 538.5 524.1 539.9 524.2 541.4 524.2 542.8 524.1 544.3 524.0 545.7 523.8 547.1 523.6 548.5 523.3 549.9 523.0 551.3 522.6 552.7 522.2 554.1 521.7 555.5 521.3 556.8 520.8 558.2 520.3 559.6 519.7 561.0 519.2 562.4 518.6 563.8 518.0 565.2 517.5 566.5 516.9 567.9 516.4 569.3 515.8 570.7 515.3 572.1 514.8 573.5 514.3 574.9 513.9 576.3 513.5 577.8 513.1 579.2 512.8 580.6 512.5 582.0 512.3 583.5 512.1 584.9 512.0 586.3 511.9 587.8 511.9 589.2 511.8 590.7 511.9 592.1 511.9 593.6 512.0 595.0 512.2 596.5 512.3 597.9 512.6 599.4 512.8 600.8 513.0 602.3 513.3 603.7 513.6 605.2 514.0 606.6 514.3 608.1 514.7 609.5 515.1 611.0 515.5 612.4 516.0 613.8 516.4 615.3 516.9 616.7 517.3 618.1 517.8 619.5 518.3 620.9 518.8 622.4 519.3 623.8 519.8 625.2 520.4 626.6 520.9 628.0 521.4 629.4 521.9 630.8 522.4 632.2 522.9 633.6 523.4 635.0 523.9 636.4 524.4 637.8 524.9 639.2 525.3 640.6 525.8 642.1 526.2 643.5 526.6 644.9 527.0 646.3 527.4 647.7 527.8 649.1 528.1 650.5 528.4 651.9 528.7 653.4 529.0 654.8 529.2 656.2 529.4 657.6 529.6 659.1 529.7 660.5 529.8 662.0 529.9 663.4 529.9 664.9 529.9 666.3 529.9 667.8 529.8 669.2 529.7 670.7 529.6 672.1 529.5 673.6 529.3 675.0 529.0 676.5 528.8 677.9 528.5 679.4 528.2 680.8 527.9 682.3 527.5 683.7 527.1 685.1 526.7 686.5 526.3 688.0 525.8 689.4 525.3 690.8 524.8 692.1 524.2 693.5 523.7 694.9 523.1 696.3 522.5 697.6 521.9 699.0 521.3 700.4 520.7 701.7 520.1 703.1 519.6 704.5 519.0 705.8 518.5 707.2 518.0 708.6 517.5 710.0 517.1 711.4 516.7 712.9 516.3 714.3 515.9 715.7 515.6 717.2 515.3 718.6 515.1 720.0 514.9 721.5 514.7 723.0 514.5 724.4 514.4 725.9 514.3 727.3 514.3 728.8 514.2 730.2 514.2 731.7 514.3 733.2 514.3 734.6 514.4 736.1 514.6 737.5 514.7 739.0 514.9 740.4 515.1 741.9 515.4 743.3 515.6 744.8 515.9 746.2 516.2 747.6 516.6 749.1 516.9 750.5 517.3 751.9 517.6 753.4 518.0 754.8 518.4 756.2 518.9 757.7 519.3 759.1 519.7 760.5 520.2 762.0 520.6 763.4 521.1 764.8 521.6 766.2 522.0 767.7 522.5 769.1 523.0 770.5 523.4 771.9 523.9 773.4 524.4 774.8 524.8 776.2 525.3 777.6 525.7 779.0 526.2 780.5 526.6 781.9 527.0 783.3 527.4 784.7 527.8 786.2 528.2 787.6 528.6 789.0 528.9 790.4 529.2 791.9 529.5 793.3 529.8 794.7 530.1 796.2 530.3 797.6 530.5 799.0 530.7 800.5 530.9 801.9 531.0 803.3 531.1 804.8 531.2 806.2 531.2 807.7 531.2 809.1 531.2 810.5 531.1 812.0 531.0 813.4 530.8 814.9 530.6 816.3 530.4 817.8 530.2 819.2 529.9 820.7 529.6 822.1 529.2 823.5 528.9 825.0 528.5 826.4 528.0 827.8 527.6 829.2 527.1 830.6 526.6 832.0 526.1 833.4 525.5 834.7 524.9 836.1 524.3 837.5 523.7 838.8 523.1 840.1 522.5 841.5 521.9 842.8 521.3 844.2 520.7 845.5 520.1 846.9 519.5 848.2 519.0 849.6 518.4 851.0 517.9 852.3 517.5 853.7 517.0 855.1 516.6 856.5 516.2 858.0 515.8 859.4 515.5 860.8 515.2 862.3 514.9 863.7 514.7 865.2 514.5 866.6 514.3 868.1 514.1 869.6 514.0 871.0 513.9 872.5 513.8 874.0 513.8 875.5 513.7 877.0 513.8 878.5 513.8 880.0 513.9" stroke="#000" stroke-width="5.5" fill="none" stroke-linejoin="round"/>
</g></svg>
<svg style="position:absolute;left:0;top:0" width="899" height="56"><rect x="4.5" y="9.5" width="15" height="15" fill="#f8f8f8" stroke="#9aa3ad"/><rect x="5" y="10" width="14" height="2" fill="#a9b9cc"/><path d="M6.5 19.5 L10 17 L13 12.5 L15.5 16 L17.5 21 L15 19.5 L13.5 22 L11.5 18.5 Z" fill="#e2662a"/><path d="M6.5 19.5 L10 17 L11.5 18.5 L9.5 20.5Z" fill="#3a8fc9"/><path d="M13 12.5 L15.5 16 L17.5 21 L15 19.5Z" fill="#b83a1c"/><text x="24" y="21.4" font-family="Liberation Sans, sans-serif" font-size="12" fill="#2f3552">Molecular Dynamics</text><rect x="794.5" y="9.5" width="30" height="16" rx="3" fill="url(#wbg)" stroke="#8b9bb1"/><rect x="827.5" y="9.5" width="30" height="16" rx="3" fill="url(#wbg)" stroke="#8b9bb1"/><rect x="860.5" y="9.5" width="30" height="16" rx="3" fill="url(#wbg)" stroke="#8b9bb1"/><rect x="804.5" y="17.5" width="10" height="3" rx="1" fill="#fff" stroke="#4d5566"/><rect x="837.5" y="13.5" width="10" height="8" rx="1" fill="#e8eaee" stroke="#4d5566"/><rect x="840" y="16" width="5" height="3" fill="#fff" stroke="#4d5566" stroke-width="0.8"/><path d="M870.5 13.5 L879.5 21.5 M879.5 13.5 L870.5 21.5" stroke="#4d5566" stroke-width="3.2"/><path d="M870.5 13.5 L879.5 21.5 M879.5 13.5 L870.5 21.5" stroke="#f2f2f2" stroke-width="1.6"/><path d="M97.5 31 V52" stroke="#a0a0a0"/><path d="M128.5 31 V52" stroke="#a0a0a0"/><path d="M286.5 31 V52" stroke="#a0a0a0"/><path d="M317.5 31 V52" stroke="#a0a0a0"/><path d="M371.5 31 V52" stroke="#a0a0a0"/><path d="M7.5 32.5 H16.5 L20.5 36.5 V47.5 H7.5 Z" fill="#eef4ff" stroke="#6f7fb0"/><path d="M16.5 32.5 V36.5 H20.5" fill="#cfdcf5" stroke="#6f7fb0"/><circle cx="8" cy="35" r="2" fill="#f58a3a"/><path d="M5 35 H11 M8 32 V38" stroke="#f25a2a" stroke-width="0.8"/><path d="M28.5 36.5 H33 L34.5 38 H41.5 V46.5 H28.5 Z" fill="#e9c44a" stroke="#a98314"/><path d="M28.5 46.5 L31 40.5 H43.5 L41.5 46.5 Z" fill="#f7dc7a" stroke="#a98314"/><path d="M36 35 Q39 31.5 42 34" stroke="#3b6fb5" stroke-width="1.2" fill="none"/><path d="M41 32 L43 34.5 L40 35 Z" fill="#3b6fb5"/><rect x="52.5" y="33.5" width="14" height="14" fill="#4a4ab8" stroke="#2b2b7a"/><rect x="55" y="34" width="9" height="6" fill="#e8ecff"/><rect x="56" y="43" width="6" height="4" fill="#202050"/><rect x="57" y="44" width="2" height="2" fill="#ddd"/><path d="M78.5 32.5 H85.5 V38.5 H78.5Z" fill="#dfeaf5" stroke="#8a9aaa"/><path d="M75.5 38.5 H88.5 V45.5 H75.5Z" fill="#b8bcc0" stroke="#6e7276"/><path d="M76 42 H88" stroke="#8e9296"/><rect x="78" y="45" width="8" height="2.5" fill="#909498"/><circle cx="86" cy="40.5" r="0.8" fill="#3c3"/><path d="M110.5 33.5 V46.5 L113.5 43.5 L116 48 L118 47 L115.7 42.7 L119.5 42.5 Z" fill="#fff" stroke="#000" stroke-linejoin="round"/><path d="M145.7 40.5 L151.2 46" stroke="#8a5a10" stroke-width="3.2" stroke-linecap="round"/><path d="M145.7 40.5 L151.2 46" stroke="#f3a640" stroke-width="2" stroke-linecap="round"/><circle cx="141.7" cy="37.5" r="5" fill="#e6f0ff" stroke="#8b95c8" stroke-width="1.3"/><path d="M138.7 37.5 H144.7" stroke="#2a3f8c" stroke-width="1.5"/><path d="M141.7 34.5 V40.5" stroke="#2a3f8c" stroke-width="1.5"/><path d="M168.6 40.5 L174.1 46" stroke="#8a5a10" stroke-width="3.2" stroke-linecap="round"/><path d="M168.6 40.5 L174.1 46" stroke="#f3a640" stroke-width="2" stroke-linecap="round"/><circle cx="164.6" cy="37.5" r="5" fill="#e6f0ff" stroke="#8b95c8" stroke-width="1.3"/><path d="M161.6 37.5 H167.6" stroke="#2a3f8c" stroke-width="1.5"/><path d="M184 40 Q183 38 185 38 L188 41 V35 Q188 33 189.5 34 L190.5 39 V33.5 Q191.5 32 193 33.5 L193.5 39 V34.5 Q195 33.5 196 35 L196 41 Q197.5 38.5 198 40 Q197 45 195 47.5 H189 Q186 45 184 40Z" fill="#f7dcc2" stroke="#3a5fc0" stroke-width="1"/><rect x="202.5" y="30.5" width="22" height="20" rx="2.5" fill="#dcdcdc" stroke="#6a6a6a"/><path d="M208 35.5 A6.8 6.8 0 1 0 214 33.2" fill="none" stroke="#2d4a8a" stroke-width="2.2"/><path d="M205.5 32.5 L211 33 L207.5 37.5Z" fill="#2d4a8a"/><path d="M211 38 L214 36.5 L217 38 V42 L214 43.5 L211 42Z" fill="#dbe8ff" stroke="#2d4a8a" stroke-width="0.9"/><rect x="233.5" y="32.5" width="9.5" height="9.5" fill="#faf3b0" stroke="#7a7a30"/><path d="M235 35.5 H241.5 M235 37.5 H241.5 M235 39.5 H241.5" stroke="#b0a850" stroke-width="1"/><path d="M228 35 L233 45 L242 47" stroke="#1a2aff" stroke-dasharray="2 1.5" fill="none"/><path d="M233 40 V46 M230 43 H236" stroke="#000" stroke-width="1.8"/><path d="M258 42 L266 33" stroke="#2a3f9a" stroke-width="3.2" stroke-linecap="round"/><path d="M258 42 L266 33" stroke="#c8d6ff" stroke-width="1.4" stroke-linecap="round"/><path d="M253 47 Q254 43 257 41 L259.5 43.5 Q258 46.5 253 47Z" fill="#555" stroke="#222" stroke-width="0.7"/><rect x="261.5" y="41.5" width="6" height="6" fill="#f00"/><path d="M275.5 39 H280.5 L278 42Z" fill="#222"/><rect x="296.5" y="32.5" width="11" height="9" fill="#f4f6fa" stroke="#2d4a8a"/><rect x="294.5" y="35.5" width="11" height="9" fill="#f4f6fa" stroke="#2d4a8a"/><rect x="295" y="36" width="10" height="1.5" fill="#2d4a8a"/><ellipse cx="299" cy="45.5" rx="3.5" ry="2" fill="none" stroke="#50607a" stroke-width="1.3"/><ellipse cx="305" cy="45.5" rx="3.5" ry="2" fill="none" stroke="#50607a" stroke-width="1.3"/><defs><linearGradient id="cbg" x1="0" y1="0" x2="0" y2="1"><stop offset="0" stop-color="#9aa8ee"/><stop offset="0.45" stop-color="#8fe6e6"/><stop offset="0.75" stop-color="#eee58a"/><stop offset="1" stop-color="#f0a070"/></linearGradient><linearGradient id="wbg" x1="0" y1="0" x2="0" y2="1"><stop offset="0" stop-color="#e3ebf4"/><stop offset="1" stop-color="#c8d5e4"/></linearGradient></defs><rect x="328.5" y="32.5" width="9" height="14" fill="url(#cbg)" stroke="#2d3f7a"/><rect x="348.5" y="32.5" width="14" height="14" fill="#fff" stroke="#2d3f7a"/><rect x="350" y="35" width="4" height="3" fill="#e85a5a"/><rect x="350" y="41" width="4" height="3" fill="#5a5ae8"/><path d="M356 36.5 H361 M356 42.5 H361" stroke="#000" stroke-width="1.2"/><rect x="382" y="35" width="10.5" height="10" rx="1" fill="#9a9a9a" stroke="#b8b8b8"/><rect x="402.5" y="33.5" width="14" height="13" fill="#2d4a9a" stroke="#1e3070"/><rect x="405" y="36" width="9" height="8" fill="#fff"/><rect x="403" y="34" width="13" height="1.5" fill="#5a78c8"/><path d="M882 39.5 L887 44 M887 41 V44 H884" stroke="#000" stroke-width="1.4" fill="none"/></svg>
</body></html>
